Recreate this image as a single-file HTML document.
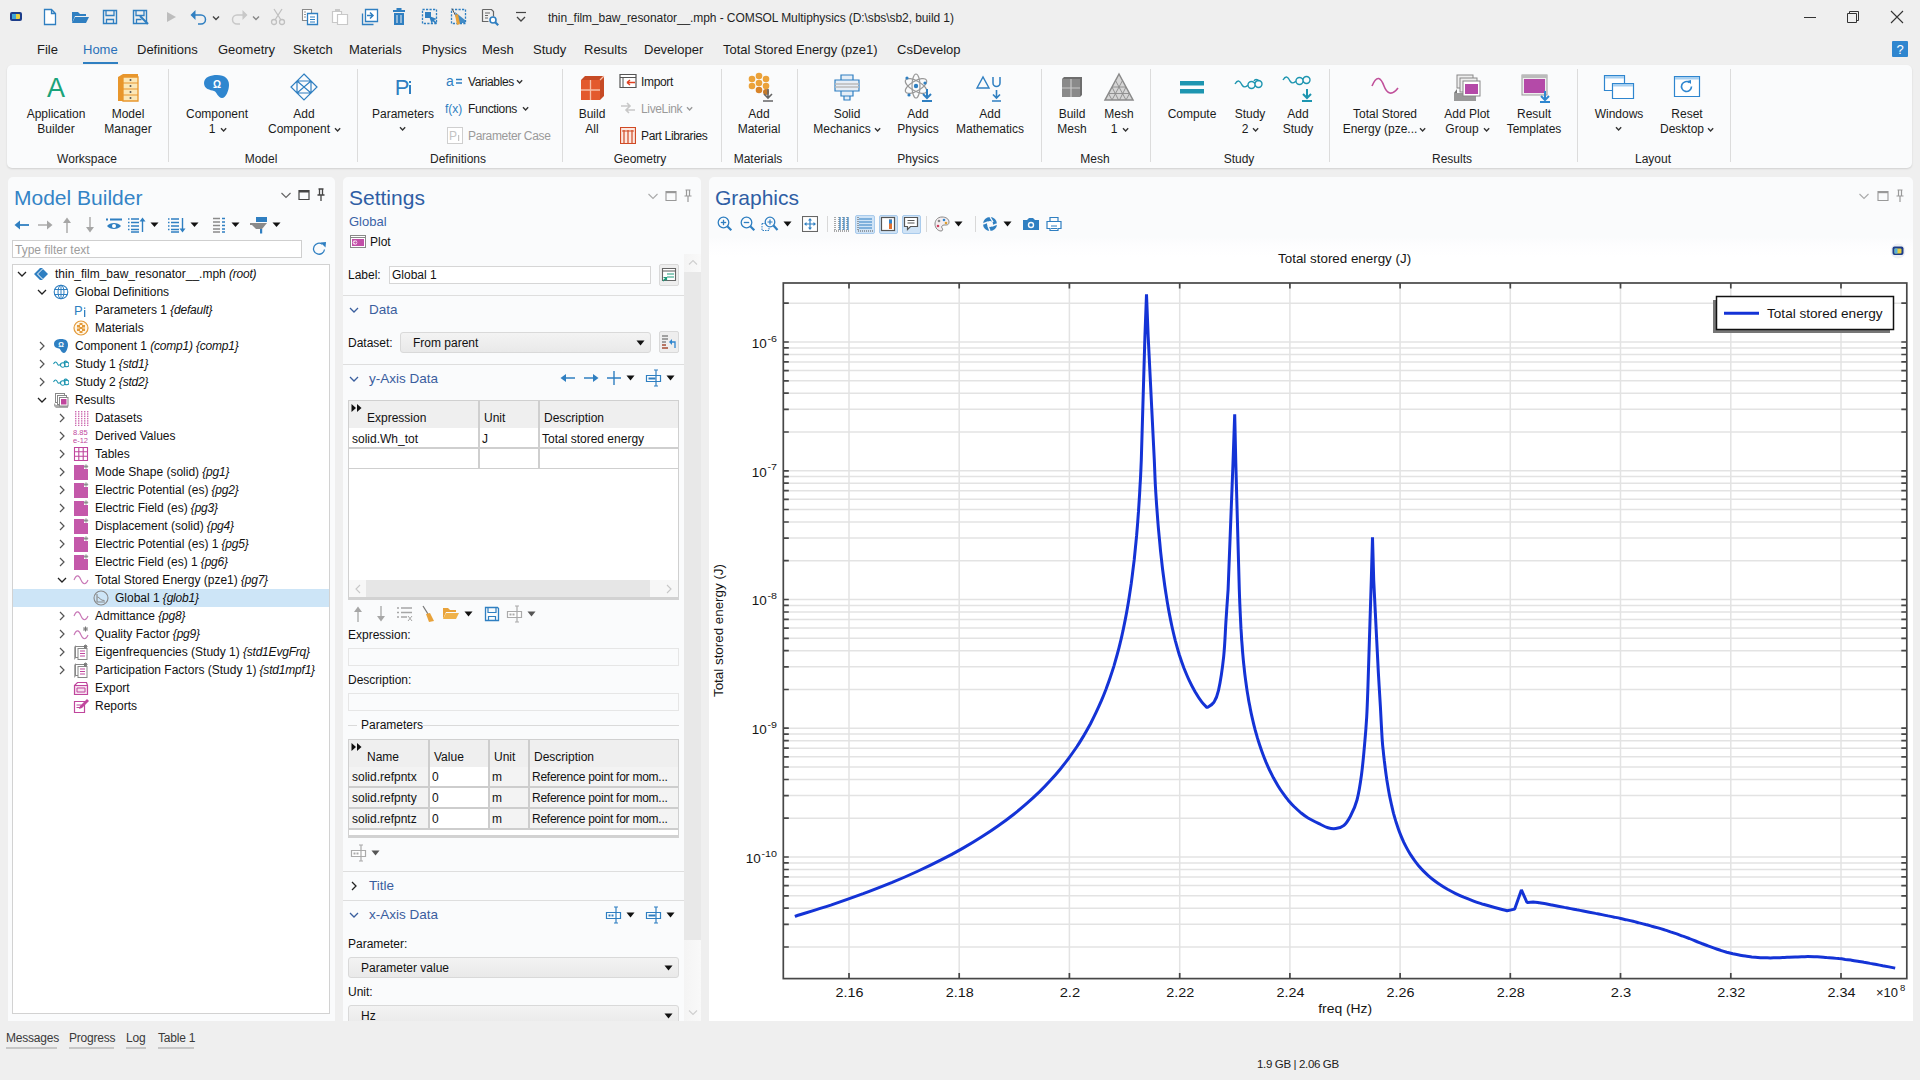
<!DOCTYPE html>
<html><head><meta charset="utf-8">
<style>
*{box-sizing:border-box;margin:0;padding:0}
html,body{width:1920px;height:1080px;overflow:hidden;background:#efefef;font-family:"Liberation Sans",sans-serif;color:#1b1b1b;position:relative}
.a{position:absolute;white-space:nowrap}
.t{position:absolute;white-space:nowrap;font-size:13px;line-height:16px}
.panel{position:absolute;background:#fafbfc;border-radius:5px}
</style></head><body>
<svg class="a" style="left:8px;top:10px;" width="16" height="14" viewBox="0 0 16 14"><rect x="2" y="2" width="12" height="9" rx="2" fill="#1d3d8a"/><rect x="4" y="4" width="8" height="5" rx="1" fill="#e8d040"/><rect x="4" y="4" width="4" height="5" fill="#3fa7d6"/></svg>
<svg class="a" style="left:42px;top:8px;" width="16" height="18" viewBox="0 0 16 18"><path d="M2.5 1.5h7l4 4v11h-11z M9.5 1.5v4h4" stroke="#2f7fc1" stroke-width="1.3" fill="#fff"/></svg>
<svg class="a" style="left:71px;top:9px;" width="19" height="16" viewBox="0 0 19 16"><path d="M1 3h6l2 2h6v2H4L1 14z" fill="#2f7fc1"/><path d="M4 8h14l-3 6H1z" fill="#2f7fc1"/></svg>
<svg class="a" style="left:102px;top:9px;" width="16" height="16" viewBox="0 0 16 16"><path d="M1.5 1.5h13v13h-13z" stroke="#2f7fc1" stroke-width="1.4" fill="none"/><path d="M4 1.5v5h8v-5M4.5 14.5v-4h7v4" stroke="#2f7fc1" stroke-width="1.3" fill="none"/></svg>
<svg class="a" style="left:132px;top:9px;" width="18" height="17" viewBox="0 0 18 17"><path d="M1.5 1.5h13v13h-13z" stroke="#2f7fc1" stroke-width="1.4" fill="none"/><path d="M4 1.5v5h8v-5M4.5 14.5v-4h5" stroke="#2f7fc1" stroke-width="1.3" fill="none"/><path d="M8 7l8 8" stroke="#2f7fc1" stroke-width="2.2"/></svg>
<svg class="a" style="left:166px;top:11px;" width="12" height="12" viewBox="0 0 12 12"><path d="M1 1l9 5-9 5z" fill="#bdbdbd"/></svg>
<svg class="a" style="left:190px;top:9px;" width="18" height="16" viewBox="0 0 18 16"><path d="M3 6h8a4.5 4.5 0 0 1 0 9H8" stroke="#2f7fc1" stroke-width="1.5" fill="none"/><path d="M0.5 6l5-5v10z" fill="#2f7fc1"/></svg>
<svg class="a" style="left:212px;top:15px;" width="8" height="6" viewBox="0 0 8 6"><path d="M1 1.5 L4 4.5 L7 1.5" stroke="#444" stroke-width="1.4" fill="none"/></svg>
<svg class="a" style="left:230px;top:9px;" width="18" height="16" viewBox="0 0 18 16"><path d="M15 6H7a4.5 4.5 0 0 0 0 9h3" stroke="#c8c8c8" stroke-width="1.5" fill="none"/><path d="M17.5 6l-5-5v10z" fill="#c8c8c8"/></svg>
<svg class="a" style="left:252px;top:15px;" width="8" height="6" viewBox="0 0 8 6"><path d="M1 1.5 L4 4.5 L7 1.5" stroke="#888" stroke-width="1.4" fill="none"/></svg>
<svg class="a" style="left:270px;top:8px;" width="16" height="18" viewBox="0 0 16 18"><circle cx="4" cy="14" r="2.5" stroke="#c0c0c0" stroke-width="1.3" fill="none"/><circle cx="12" cy="14" r="2.5" stroke="#c0c0c0" stroke-width="1.3" fill="none"/><path d="M5 12L12 1M11 12L4 1" stroke="#c0c0c0" stroke-width="1.3"/></svg>
<svg class="a" style="left:301px;top:8px;" width="18" height="18" viewBox="0 0 18 18"><path d="M1.5 1.5h9v11h-9z" stroke="#8a8a8a" stroke-width="1.1" fill="#fff"/><path d="M3 4h2M3 6.5h2M3 9h2" stroke="#8a8a8a" stroke-width="0.9"/><path d="M6.5 5.5h10v11h-10z" stroke="#2f7fc1" stroke-width="1.3" fill="#fff"/><path d="M9 9h5M9 11.5h5M9 14h5" stroke="#2f7fc1" stroke-width="1.1"/></svg>
<svg class="a" style="left:331px;top:8px;" width="18" height="18" viewBox="0 0 18 18"><path d="M1.5 3.5h9v11h-9z" stroke="#c8c8c8" stroke-width="1.2" fill="#fff"/><path d="M6.5 6.5h10v10h-10z" stroke="#c8c8c8" stroke-width="1.2" fill="#fff"/><rect x="4" y="1" width="5" height="3" fill="#c8c8c8"/></svg>
<svg class="a" style="left:361px;top:8px;" width="18" height="18" viewBox="0 0 18 18"><path d="M4.5 1.5h12v12h-12z" stroke="#2f7fc1" stroke-width="1.3" fill="#fff"/><path d="M1.5 5.5v11h11" stroke="#2f7fc1" stroke-width="1.3" fill="none"/><path d="M6 7.5h6M9 4.5l3 3-3 3" stroke="#2f7fc1" stroke-width="1.5" fill="none"/></svg>
<svg class="a" style="left:392px;top:8px;" width="14" height="18" viewBox="0 0 14 18"><rect x="1" y="2" width="12" height="2" fill="#2f7fc1"/><rect x="4.5" y="0" width="5" height="2" fill="#2f7fc1"/><path d="M2 5h10v12H2z" fill="#2f7fc1"/><path d="M5 7v8M9 7v8" stroke="#f0f0f0" stroke-width="1"/></svg>
<svg class="a" style="left:421px;top:8px;" width="18" height="18" viewBox="0 0 18 18"><path d="M1.5 1.5h14v14h-14z" stroke="#2f7fc1" stroke-width="1.3" stroke-dasharray="2.2 1.3" fill="none"/><rect x="4" y="4" width="6" height="6" fill="#2f7fc1"/><path d="M8 8l8 3-3 1 3 3-1.2 1.2-3-3-1 3z" fill="#2f7fc1"/></svg>
<svg class="a" style="left:450px;top:8px;" width="18" height="18" viewBox="0 0 18 18"><path d="M1.5 1.5h14v14h-14z" stroke="#2f7fc1" stroke-width="1.3" stroke-dasharray="2.2 1.3" fill="none"/><path d="M5 4l10 8v3H8z" fill="#2f7fc1" opacity="0.9"/><path d="M2 0.5l4 8" stroke="#555" stroke-width="1"/><path d="M5 7l3-1 2 10-3 1z" fill="#e8a23a"/></svg>
<svg class="a" style="left:481px;top:8px;" width="18" height="18" viewBox="0 0 18 18"><path d="M1.5 1.5h9l2 2v5M1.5 1.5v12h6" stroke="#666" stroke-width="1.2" fill="none"/><path d="M4 5h5M4 7.5h3M4 10h3" stroke="#666" stroke-width="1"/><circle cx="12" cy="12" r="3" stroke="#2f7fc1" stroke-width="1.6" fill="#fff"/><path d="M14.2 14.2l3 3" stroke="#2f7fc1" stroke-width="2.2"/></svg>
<svg class="a" style="left:515px;top:11px;" width="12" height="14" viewBox="0 0 12 14"><path d="M1 1.5h10" stroke="#444" stroke-width="1.2"/><path d="M2 6l4 4 4-4" stroke="#444" stroke-width="1.3" fill="none"/></svg>
<div class="t" style="left:548px;top:9.5px;font-size:12px;color:#1f1f1f;letter-spacing:-0.08px">thin_film_baw_resonator__.mph - COMSOL Multiphysics (D:\sbs\sb2, build 1)</div>
<svg class="a" style="left:1803px;top:10px;" width="14" height="14" viewBox="0 0 14 14"><path d="M1 7.5h12" stroke="#333" stroke-width="1"/></svg>
<svg class="a" style="left:1846px;top:10px;" width="14" height="14" viewBox="0 0 14 14"><path d="M1.5 3.5h9v9h-9z M3.5 3.5v-2h9v9h-2" stroke="#333" stroke-width="1" fill="none"/></svg>
<svg class="a" style="left:1890px;top:10px;" width="14" height="14" viewBox="0 0 14 14"><path d="M1 1l12 12M13 1L1 13" stroke="#333" stroke-width="1.1"/></svg>
<svg class="a" style="left:1892px;top:41px;" width="16" height="16" viewBox="0 0 16 16"><rect x="0" y="0" width="16" height="16" rx="1" fill="#2f86cf"/><text x="8" y="13" text-anchor="middle" font-family="Liberation Sans" font-size="13" fill="#fff">?</text></svg>
<div class="t" style="left:37px;top:41.5px;font-size:13px;color:#1b1b1b;">File</div>
<div class="t" style="left:83px;top:41.5px;font-size:13px;color:#2a6fb8;">Home</div>
<div class="t" style="left:137px;top:41.5px;font-size:13px;color:#1b1b1b;">Definitions</div>
<div class="t" style="left:218px;top:41.5px;font-size:13px;color:#1b1b1b;">Geometry</div>
<div class="t" style="left:293px;top:41.5px;font-size:13px;color:#1b1b1b;">Sketch</div>
<div class="t" style="left:349px;top:41.5px;font-size:13px;color:#1b1b1b;">Materials</div>
<div class="t" style="left:422px;top:41.5px;font-size:13px;color:#1b1b1b;">Physics</div>
<div class="t" style="left:482px;top:41.5px;font-size:13px;color:#1b1b1b;">Mesh</div>
<div class="t" style="left:533px;top:41.5px;font-size:13px;color:#1b1b1b;">Study</div>
<div class="t" style="left:584px;top:41.5px;font-size:13px;color:#1b1b1b;">Results</div>
<div class="t" style="left:644px;top:41.5px;font-size:13px;color:#1b1b1b;">Developer</div>
<div class="t" style="left:723px;top:41.5px;font-size:13px;color:#1b1b1b;">Total Stored Energy (pze1)</div>
<div class="t" style="left:897px;top:41.5px;font-size:13px;color:#1b1b1b;">CsDevelop</div>
<div class="a" style="left:83px;top:62px;width:35px;height:2px;background:#2f7fc1"></div>
<div class="panel" style="left:7px;top:65px;width:1905px;height:103px;box-shadow:0 1px 2px rgba(0,0,0,0.13)"></div>
<div class="a" style="left:168.0px;top:69px;width:1px;height:93px;background:#dcdcdc"></div>
<div class="a" style="left:357.0px;top:69px;width:1px;height:93px;background:#dcdcdc"></div>
<div class="a" style="left:562.0px;top:69px;width:1px;height:93px;background:#dcdcdc"></div>
<div class="a" style="left:721.0px;top:69px;width:1px;height:93px;background:#dcdcdc"></div>
<div class="a" style="left:797.0px;top:69px;width:1px;height:93px;background:#dcdcdc"></div>
<div class="a" style="left:1040.5px;top:69px;width:1px;height:93px;background:#dcdcdc"></div>
<div class="a" style="left:1150.0px;top:69px;width:1px;height:93px;background:#dcdcdc"></div>
<div class="a" style="left:1329.0px;top:69px;width:1px;height:93px;background:#dcdcdc"></div>
<div class="a" style="left:1577.0px;top:69px;width:1px;height:93px;background:#dcdcdc"></div>
<div class="a" style="left:1729.5px;top:69px;width:1px;height:93px;background:#dcdcdc"></div>
<div class="t" style="left:7.0px;top:150.5px;width:160px;text-align:center;font-size:12px;color:#222;">Workspace</div>
<div class="t" style="left:181.0px;top:150.5px;width:160px;text-align:center;font-size:12px;color:#222;">Model</div>
<div class="t" style="left:378.0px;top:150.5px;width:160px;text-align:center;font-size:12px;color:#222;">Definitions</div>
<div class="t" style="left:560.0px;top:150.5px;width:160px;text-align:center;font-size:12px;color:#222;">Geometry</div>
<div class="t" style="left:678.0px;top:150.5px;width:160px;text-align:center;font-size:12px;color:#222;">Materials</div>
<div class="t" style="left:838.0px;top:150.5px;width:160px;text-align:center;font-size:12px;color:#222;">Physics</div>
<div class="t" style="left:1015.0px;top:150.5px;width:160px;text-align:center;font-size:12px;color:#222;">Mesh</div>
<div class="t" style="left:1159.0px;top:150.5px;width:160px;text-align:center;font-size:12px;color:#222;">Study</div>
<div class="t" style="left:1372.0px;top:150.5px;width:160px;text-align:center;font-size:12px;color:#222;">Results</div>
<div class="t" style="left:1573.0px;top:150.5px;width:160px;text-align:center;font-size:12px;color:#222;">Layout</div>
<svg class="a" style="left:40px;top:71px;" width="32" height="34" viewBox="0 0 32 34"><text x="16" y="26" text-anchor="middle" font-family="Liberation Sans" font-size="27" fill="#1aa37a">A</text></svg>
<div class="t" style="left:-24.0px;top:106.0px;width:160px;text-align:center;font-size:12px;color:#1b1b1b;">Application</div>
<div class="t" style="left:-24.0px;top:121.0px;width:160px;text-align:center;font-size:12px;color:#1b1b1b;">Builder</div>
<svg class="a" style="left:112px;top:71px;" width="32" height="34" viewBox="0 0 32 34"><path d="M6 6l5-3h15v24l-5 3H6z" fill="#e8962c"/><path d="M11 6h15v24H11z" fill="#fbe7b8" stroke="#e8962c" stroke-width="1.3"/><path d="M11 12h15M11 18h15M11 24h15" stroke="#e8962c" stroke-width="1.2"/><circle cx="18.5" cy="9" r="1" fill="#555"/><circle cx="18.5" cy="15" r="1" fill="#555"/><circle cx="18.5" cy="21" r="1" fill="#555"/><circle cx="18.5" cy="27" r="1" fill="#555"/></svg>
<div class="t" style="left:48.0px;top:106.0px;width:160px;text-align:center;font-size:12px;color:#1b1b1b;">Model</div>
<div class="t" style="left:48.0px;top:121.0px;width:160px;text-align:center;font-size:12px;color:#1b1b1b;">Manager</div>
<svg class="a" style="left:201px;top:71px;" width="32" height="34" viewBox="0 0 32 34"><path d="M3 12c0-6 7-8 13-8 8 0 12 4 12 10 0 5-3 13-7 13-4 0-5-6-8-7-4-1-10-2-10-8z" fill="#2f86cf"/><text x="16" y="17" text-anchor="middle" font-family="Liberation Sans" font-size="10" font-weight="bold" fill="#fff">&#937;</text></svg>
<div class="t" style="left:137.0px;top:106.0px;width:160px;text-align:center;font-size:12px;color:#1b1b1b;">Component</div>
<div class="t" style="left:137.0px;top:121.0px;width:160px;text-align:center;font-size:12px;color:#1b1b1b;">1 &nbsp;&nbsp;</div>
<svg class="a" style="left:219.9px;top:127.4px;" width="7.2" height="5.2" viewBox="0 0 7.2 5.2"><path d="M1 1.3 L3.6 3.9000000000000004 L6.2 1.3" stroke="#333" stroke-width="1.4" fill="none"/></svg>
<svg class="a" style="left:288px;top:71px;" width="32" height="34" viewBox="0 0 32 34"><path d="M16 3l13 13-13 13L3 16z M9 10h14v12H9z M9 10l7 6 7-6M9 22l7-6 7 6" stroke="#2f7fc1" stroke-width="1.2" fill="none"/></svg>
<div class="t" style="left:224.0px;top:106.0px;width:160px;text-align:center;font-size:12px;color:#1b1b1b;">Add</div>
<div class="t" style="left:224.0px;top:121.0px;width:160px;text-align:center;font-size:12px;color:#1b1b1b;">Component &nbsp;&nbsp;</div>
<svg class="a" style="left:334.4px;top:127.4px;" width="7.2" height="5.2" viewBox="0 0 7.2 5.2"><path d="M1 1.3 L3.6 3.9000000000000004 L6.2 1.3" stroke="#333" stroke-width="1.4" fill="none"/></svg>
<svg class="a" style="left:387px;top:71px;" width="32" height="34" viewBox="0 0 32 34"><text x="15" y="24" text-anchor="middle" font-family="Liberation Sans" font-size="22" fill="#2f7fc1">P</text><rect x="22" y="14" width="2" height="9" fill="#2f7fc1"/><rect x="22" y="10" width="2" height="2" fill="#2f7fc1"/></svg>
<div class="t" style="left:323.0px;top:106.0px;width:160px;text-align:center;font-size:12px;color:#1b1b1b;">Parameters</div>
<svg class="a" style="left:399.4px;top:126.4px;" width="7.2" height="5.2" viewBox="0 0 7.2 5.2"><path d="M1 1.3 L3.6 3.9000000000000004 L6.2 1.3" stroke="#333" stroke-width="1.4" fill="none"/></svg>
<svg class="a" style="left:446px;top:73px;" width="18" height="16" viewBox="0 0 18 16"><text x="0" y="13" font-family="Liberation Sans" font-size="14" fill="#2f7fc1">a</text><path d="M10 6.5h6M10 10h6" stroke="#2f7fc1" stroke-width="1.3"/></svg>
<div class="t" style="left:468px;top:73.5px;font-size:12px;color:#1b1b1b;letter-spacing:-0.35px">Variables</div>
<svg class="a" style="left:516.4px;top:79.4px;" width="7.2" height="5.2" viewBox="0 0 7.2 5.2"><path d="M1 1.3 L3.6 3.9000000000000004 L6.2 1.3" stroke="#333" stroke-width="1.4" fill="none"/></svg>
<svg class="a" style="left:445px;top:100px;" width="20" height="16" viewBox="0 0 20 16"><text x="0" y="12.5" font-family="Liberation Sans" font-size="12" fill="#2f7fc1">f(x)</text></svg>
<div class="t" style="left:468px;top:100.5px;font-size:12px;color:#1b1b1b;letter-spacing:-0.35px">Functions</div>
<svg class="a" style="left:522.4px;top:106.4px;" width="7.2" height="5.2" viewBox="0 0 7.2 5.2"><path d="M1 1.3 L3.6 3.9000000000000004 L6.2 1.3" stroke="#333" stroke-width="1.4" fill="none"/></svg>
<svg class="a" style="left:447px;top:127px;" width="16" height="17" viewBox="0 0 16 17"><rect x="0.5" y="0.5" width="15" height="16" fill="#fff" stroke="#cfcfcf"/><text x="2" y="13" font-family="Liberation Sans" font-size="12" fill="#c4c4c4">P</text><rect x="11" y="8" width="1.2" height="6" fill="#c4c4c4"/></svg>
<div class="t" style="left:468px;top:128.0px;font-size:12px;color:#9a9a9a;letter-spacing:-0.35px">Parameter Case</div>
<svg class="a" style="left:576px;top:71px;" width="32" height="34" viewBox="0 0 32 34"><path d="M5 9l4-4h19v20l-4 4H5z" fill="#c64a25"/><path d="M5 9h19v20H5z" fill="#e35a2d"/><path d="M14.5 9v20M5 19h19M24 9l4-4" stroke="#f6c0a8" stroke-width="1.3"/></svg>
<div class="t" style="left:512.0px;top:106.0px;width:160px;text-align:center;font-size:12px;color:#1b1b1b;">Build</div>
<div class="t" style="left:512.0px;top:121.0px;width:160px;text-align:center;font-size:12px;color:#1b1b1b;">All</div>
<svg class="a" style="left:619px;top:73px;" width="18" height="16" viewBox="0 0 18 16"><path d="M1 1.5h16v13H1z" stroke="#555" stroke-width="1.2" fill="#fff"/><path d="M1 4.5h16M4 4.5v10" stroke="#555" stroke-width="1"/><path d="M8 9.5h8M8 9.5l3-2.5M8 9.5l3 2.5" stroke="#e04020" stroke-width="1.4" fill="none"/></svg>
<div class="t" style="left:641px;top:73.5px;font-size:12px;color:#1b1b1b;letter-spacing:-0.35px">Import</div>
<svg class="a" style="left:619px;top:101px;" width="18" height="14" viewBox="0 0 18 14"><path d="M2 5h9M8 2l3 3-3 3M16 9H7M10 12l-3-3 3-3" stroke="#c8c8c8" stroke-width="1.6" fill="none"/></svg>
<div class="t" style="left:641px;top:100.5px;font-size:12px;color:#9a9a9a;letter-spacing:-0.35px">LiveLink</div>
<svg class="a" style="left:686.4px;top:106.4px;" width="7.2" height="5.2" viewBox="0 0 7.2 5.2"><path d="M1 1.3 L3.6 3.9000000000000004 L6.2 1.3" stroke="#999" stroke-width="1.4" fill="none"/></svg>
<svg class="a" style="left:620px;top:127px;" width="16" height="17" viewBox="0 0 16 17"><path d="M0.5 0.5h15v16H0.5z" stroke="#d04a25" stroke-width="1.2" fill="#fde8e0"/><path d="M4 3v13M8 3v13M12 3v13" stroke="#d04a25" stroke-width="1.2"/><path d="M2 4h12" stroke="#d04a25" stroke-width="1"/></svg>
<div class="t" style="left:641px;top:128.0px;font-size:12px;color:#1b1b1b;letter-spacing:-0.35px">Part Libraries</div>
<svg class="a" style="left:743px;top:71px;" width="32" height="34" viewBox="0 0 32 34"><g fill="#eba23a"><circle cx="9" cy="8" r="3.3"/><circle cx="16" cy="5" r="3.3"/><circle cx="23" cy="8" r="3.3"/><circle cx="9" cy="15" r="3.3"/><circle cx="16" cy="12" r="3.3"/><circle cx="23" cy="15" r="3.3"/><circle cx="16" cy="19" r="3.3" fill="#d88328"/><circle cx="23" cy="21" r="3" fill="#c67a2a"/></g><path d="M25 18v9M21 23l4 4 4-4M20 30h10" stroke="#666" stroke-width="1.6" fill="none"/></svg>
<div class="t" style="left:679.0px;top:106.0px;width:160px;text-align:center;font-size:12px;color:#1b1b1b;">Add</div>
<div class="t" style="left:679.0px;top:121.0px;width:160px;text-align:center;font-size:12px;color:#1b1b1b;">Material</div>
<svg class="a" style="left:831px;top:71px;" width="32" height="34" viewBox="0 0 32 34"><path d="M10 4h12v5H10zM4 9h24v11H4zM10 20h12v5H10zM13 25h6v4h-6z" stroke="#2f7fc1" stroke-width="1.2" fill="#e6eef6"/><path d="M4 13h24M4 16h24" stroke="#bbb" stroke-width="1.5"/></svg>
<div class="t" style="left:767.0px;top:106.0px;width:160px;text-align:center;font-size:12px;color:#1b1b1b;">Solid</div>
<div class="t" style="left:767.0px;top:121.0px;width:160px;text-align:center;font-size:12px;color:#1b1b1b;">Mechanics &nbsp;&nbsp;</div>
<svg class="a" style="left:874.4px;top:127.4px;" width="7.2" height="5.2" viewBox="0 0 7.2 5.2"><path d="M1 1.3 L3.6 3.9000000000000004 L6.2 1.3" stroke="#333" stroke-width="1.4" fill="none"/></svg>
<svg class="a" style="left:902px;top:71px;" width="32" height="34" viewBox="0 0 32 34"><ellipse cx="14" cy="15" rx="12" ry="5" transform="rotate(30 14 15)" stroke="#999" stroke-width="1.2" fill="none"/><ellipse cx="14" cy="15" rx="12" ry="5" transform="rotate(-30 14 15)" stroke="#999" stroke-width="1.2" fill="none"/><ellipse cx="14" cy="15" rx="4" ry="12" stroke="#999" stroke-width="1.2" fill="none"/><circle cx="14" cy="15" r="2.2" fill="#2f7fc1"/><circle cx="5" cy="7" r="1.6" fill="#2f7fc1"/><circle cx="23" cy="12" r="1.6" fill="#2f7fc1"/><circle cx="7" cy="24" r="1.6" fill="#2f7fc1"/><path d="M25 18v9M21 23l4 4 4-4M20 30h10" stroke="#2f7fc1" stroke-width="2" fill="none"/></svg>
<div class="t" style="left:838.0px;top:106.0px;width:160px;text-align:center;font-size:12px;color:#1b1b1b;">Add</div>
<div class="t" style="left:838.0px;top:121.0px;width:160px;text-align:center;font-size:12px;color:#1b1b1b;">Physics</div>
<svg class="a" style="left:974px;top:71px;" width="32" height="34" viewBox="0 0 32 34"><path d="M3 17l6-11 6 11z" stroke="#2f7fc1" stroke-width="1.4" fill="none"/><path d="M19 6v6a3.5 3.5 0 0 0 7 0V6" stroke="#2f7fc1" stroke-width="1.5" fill="none"/><path d="M22.5 19v8M19 23.5l3.5 3.5 3.5-3.5M18 30h9" stroke="#2f7fc1" stroke-width="1.6" fill="none"/></svg>
<div class="t" style="left:910.0px;top:106.0px;width:160px;text-align:center;font-size:12px;color:#1b1b1b;">Add</div>
<div class="t" style="left:910.0px;top:121.0px;width:160px;text-align:center;font-size:12px;color:#1b1b1b;">Mathematics</div>
<svg class="a" style="left:1056px;top:71px;" width="32" height="34" viewBox="0 0 32 34"><path d="M6 8l2-2h18v18l-2 2H6z" fill="#6d6d6d"/><path d="M6 8h18v18H6z" fill="#8a8a8a"/><path d="M15 8v18M6 17h18" stroke="#c8c8c8" stroke-width="1.2"/></svg>
<div class="t" style="left:992.0px;top:106.0px;width:160px;text-align:center;font-size:12px;color:#1b1b1b;">Build</div>
<div class="t" style="left:992.0px;top:121.0px;width:160px;text-align:center;font-size:12px;color:#1b1b1b;">Mesh</div>
<svg class="a" style="left:1103px;top:71px;" width="32" height="34" viewBox="0 0 32 34"><path d="M16 3L30 29H2z" stroke="#8a8a8a" stroke-width="1.5" fill="#d5d5d5"/><path d="M9 16h14M5.5 22.5h21M12.5 9.5L23 29M19.5 9.5L9 29M9 16l6.5 13M23 16l-6.5 13M5.5 22.5L9 29M26.5 22.5L23 29" stroke="#8a8a8a" stroke-width="0.9" fill="none"/></svg>
<div class="t" style="left:1039.0px;top:106.0px;width:160px;text-align:center;font-size:12px;color:#1b1b1b;">Mesh</div>
<div class="t" style="left:1039.0px;top:121.0px;width:160px;text-align:center;font-size:12px;color:#1b1b1b;">1 &nbsp;&nbsp;</div>
<svg class="a" style="left:1122.4px;top:127.4px;" width="7.2" height="5.2" viewBox="0 0 7.2 5.2"><path d="M1 1.3 L3.6 3.9000000000000004 L6.2 1.3" stroke="#333" stroke-width="1.4" fill="none"/></svg>
<svg class="a" style="left:1176px;top:71px;" width="32" height="34" viewBox="0 0 32 34"><rect x="4" y="10" width="24" height="4.5" fill="#1d95b0"/><rect x="4" y="18" width="24" height="4.5" fill="#1d95b0"/></svg>
<div class="t" style="left:1112.0px;top:106.0px;width:160px;text-align:center;font-size:12px;color:#1b1b1b;">Compute</div>
<svg class="a" style="left:1234px;top:71px;" width="32" height="34" viewBox="0 0 32 34"><path d="M1 13c3-5 5-3 7 1 2 3 4 2 6 0M14 14a3.5 3.5 0 1 0 7 0a3.5 3.5 0 1 0-7 0M21 13a3.5 3.5 0 1 0 7 0a3.5 3.5 0 1 0-7 0M20 10c1-2 3-2 5 0" stroke="#1d95b0" stroke-width="1.4" fill="none"/></svg>
<div class="t" style="left:1170.0px;top:106.0px;width:160px;text-align:center;font-size:12px;color:#1b1b1b;">Study</div>
<div class="t" style="left:1170.0px;top:121.0px;width:160px;text-align:center;font-size:12px;color:#1b1b1b;">2 &nbsp;&nbsp;</div>
<svg class="a" style="left:1252.4px;top:127.4px;" width="7.2" height="5.2" viewBox="0 0 7.2 5.2"><path d="M1 1.3 L3.6 3.9000000000000004 L6.2 1.3" stroke="#333" stroke-width="1.4" fill="none"/></svg>
<svg class="a" style="left:1282px;top:71px;" width="32" height="34" viewBox="0 0 32 34"><path d="M1 9c3-5 5-3 7 1 2 3 4 2 6 0M14 10a3.5 3.5 0 1 0 7 0a3.5 3.5 0 1 0-7 0M21 9a3.5 3.5 0 1 0 7 0a3.5 3.5 0 1 0-7 0" stroke="#1d95b0" stroke-width="1.4" fill="none"/><path d="M25 18v9M21 23l4 4 4-4M20 30h10" stroke="#1d95b0" stroke-width="2" fill="none"/></svg>
<div class="t" style="left:1218.0px;top:106.0px;width:160px;text-align:center;font-size:12px;color:#1b1b1b;">Add</div>
<div class="t" style="left:1218.0px;top:121.0px;width:160px;text-align:center;font-size:12px;color:#1b1b1b;">Study</div>
<svg class="a" style="left:1369px;top:71px;" width="32" height="34" viewBox="0 0 32 34"><path d="M3 15c5-12 9-8 12 0s8 10 14 2" stroke="#c0509a" stroke-width="1.6" fill="none"/></svg>
<div class="t" style="left:1305.0px;top:106.0px;width:160px;text-align:center;font-size:12px;color:#1b1b1b;">Total Stored</div>
<div class="t" style="left:1305.0px;top:121.0px;width:160px;text-align:center;font-size:12px;color:#1b1b1b;">Energy (pze... &nbsp;&nbsp;</div>
<svg class="a" style="left:1419.4px;top:127.4px;" width="7.2" height="5.2" viewBox="0 0 7.2 5.2"><path d="M1 1.3 L3.6 3.9000000000000004 L6.2 1.3" stroke="#333" stroke-width="1.4" fill="none"/></svg>
<svg class="a" style="left:1451px;top:71px;" width="32" height="34" viewBox="0 0 32 34"><path d="M3 22l3-4v10l-3 2z" fill="#777"/><path d="M3 22h22v8H3z" fill="#999"/><rect x="6" y="4" width="16" height="13" fill="#eee" stroke="#888"/><rect x="9" y="7" width="17" height="14" fill="#eee" stroke="#888"/><rect x="12" y="10" width="17" height="15" fill="#fff" stroke="#888"/><rect x="14" y="13" width="13" height="10" fill="#b44aa8"/></svg>
<div class="t" style="left:1387.0px;top:106.0px;width:160px;text-align:center;font-size:12px;color:#1b1b1b;">Add Plot</div>
<div class="t" style="left:1387.0px;top:121.0px;width:160px;text-align:center;font-size:12px;color:#1b1b1b;">Group &nbsp;&nbsp;</div>
<svg class="a" style="left:1483.4px;top:127.4px;" width="7.2" height="5.2" viewBox="0 0 7.2 5.2"><path d="M1 1.3 L3.6 3.9000000000000004 L6.2 1.3" stroke="#333" stroke-width="1.4" fill="none"/></svg>
<svg class="a" style="left:1518px;top:71px;" width="32" height="34" viewBox="0 0 32 34"><rect x="4" y="4" width="25" height="20" fill="#eee" stroke="#999"/><rect x="4" y="4" width="25" height="3" fill="#bbb"/><rect x="6" y="8" width="21" height="14" fill="#b44aa8"/><path d="M27 20v8M23 25l4 4 4-4M22 31h10" stroke="#2f86cf" stroke-width="2" fill="none"/></svg>
<div class="t" style="left:1454.0px;top:106.0px;width:160px;text-align:center;font-size:12px;color:#1b1b1b;">Result</div>
<div class="t" style="left:1454.0px;top:121.0px;width:160px;text-align:center;font-size:12px;color:#1b1b1b;">Templates</div>
<svg class="a" style="left:1603px;top:71px;" width="32" height="34" viewBox="0 0 32 34"><path d="M1.5 4.5h20v15h-20z" stroke="#2f86cf" stroke-width="1.2" fill="#fff"/><rect x="2" y="5" width="19" height="2.5" fill="#a9d0f0"/><path d="M9.5 12.5h21v15h-21z" stroke="#2f86cf" stroke-width="1.2" fill="#fff"/><rect x="10" y="13" width="20" height="2.5" fill="#a9d0f0"/></svg>
<div class="t" style="left:1539.0px;top:106.0px;width:160px;text-align:center;font-size:12px;color:#1b1b1b;">Windows</div>
<svg class="a" style="left:1615.4px;top:126.4px;" width="7.2" height="5.2" viewBox="0 0 7.2 5.2"><path d="M1 1.3 L3.6 3.9000000000000004 L6.2 1.3" stroke="#333" stroke-width="1.4" fill="none"/></svg>
<svg class="a" style="left:1671px;top:71px;" width="32" height="34" viewBox="0 0 32 34"><path d="M3.5 5.5h25v20h-25z" stroke="#2f86cf" stroke-width="1.2" fill="#fff"/><rect x="4" y="6" width="24" height="2.5" fill="#a9d0f0"/><path d="M20.5 15.5a5 5 0 1 1-2-4" stroke="#2f86cf" stroke-width="1.6" fill="none"/><path d="M16 10l4-1 0 4z" fill="#2f86cf"/></svg>
<div class="t" style="left:1607.0px;top:106.0px;width:160px;text-align:center;font-size:12px;color:#1b1b1b;">Reset</div>
<div class="t" style="left:1607.0px;top:121.0px;width:160px;text-align:center;font-size:12px;color:#1b1b1b;">Desktop &nbsp;&nbsp;</div>
<svg class="a" style="left:1707.4px;top:127.4px;" width="7.2" height="5.2" viewBox="0 0 7.2 5.2"><path d="M1 1.3 L3.6 3.9000000000000004 L6.2 1.3" stroke="#333" stroke-width="1.4" fill="none"/></svg>
<div class="panel" style="left:8px;top:177px;width:327px;height:844px;border-radius:5px 5px 0 0"></div>
<div class="panel" style="left:343px;top:177px;width:358px;height:844px;border-radius:5px 5px 0 0"></div>
<div class="panel" style="left:709px;top:177px;width:1204px;height:844px;border-radius:5px 5px 0 0"></div>
<div class="t" style="left:14px;top:185px;font-size:21px;line-height:26px;color:#3484c6">Model Builder</div>
<svg class="a" style="left:280px;top:190px;" width="12" height="10" viewBox="0 0 12 10"><path d="M1.5 3l4.5 4.5L10.5 3" stroke="#666" stroke-width="1.2" fill="none"/></svg>
<svg class="a" style="left:298px;top:189px;" width="12" height="12" viewBox="0 0 12 12"><path d="M1 1.5h10v9H1z" stroke="#444" stroke-width="1.2" fill="none"/><rect x="1" y="1" width="10" height="2.5" fill="#444"/></svg>
<svg class="a" style="left:316px;top:188px;" width="10" height="14" viewBox="0 0 10 14"><path d="M2.5 1h5M3.5 1v6M6.5 1v6M1.5 7h7M5 7v6" stroke="#444" stroke-width="1.3" fill="none"/></svg>
<svg class="a" style="left:14px;top:218.5px;" width="16" height="12" viewBox="0 0 16 12"><path d="M2 6h13" stroke="#2f7fc1" stroke-width="1.8"/><path d="M0.5 6L6 1.5v9z" fill="#2f7fc1"/></svg>
<svg class="a" style="left:37px;top:218.5px;" width="16" height="12" viewBox="0 0 16 12"><path d="M1 6h12" stroke="#a6a6a6" stroke-width="1.4"/><path d="M15.5 6L10 1.5v9z" fill="#a6a6a6"/></svg>
<svg class="a" style="left:62px;top:216.5px;" width="10" height="16" viewBox="0 0 10 16"><path d="M5 3v13" stroke="#a6a6a6" stroke-width="1.4"/><path d="M5 0.5L1 6h8z" fill="#a6a6a6"/></svg>
<svg class="a" style="left:85px;top:216.5px;" width="10" height="16" viewBox="0 0 10 16"><path d="M5 0v13" stroke="#a6a6a6" stroke-width="1.4"/><path d="M5 15.5L1 10h8z" fill="#a6a6a6"/></svg>
<svg class="a" style="left:106px;top:217.5px;" width="16" height="13" viewBox="0 0 16 13"><path d="M0 1.5h2M4 1.5h12" stroke="#2f7fc1" stroke-width="1.8"/><path d="M1 8c3-4 11-4 14 0-3 4-11 4-14 0z" fill="#2f7fc1"/><circle cx="8" cy="8" r="2" fill="#fff"/></svg>
<svg class="a" style="left:128px;top:216.5px;" width="18" height="16" viewBox="0 0 18 16"><path d="M3 2h8M3 5.5h8M3 9h8M3 12.5h8M3 15h8" stroke="#2f7fc1" stroke-width="1.3"/><path d="M0 2h1.5M0 5.5h1.5M0 9h1.5M0 12.5h1.5" stroke="#2f7fc1" stroke-width="1.3"/><path d="M14.5 15V3" stroke="#2f7fc1" stroke-width="1.4"/><path d="M14.5 0.5l-3 4h6z" fill="#2f7fc1"/></svg>
<svg class="a" style="left:150px;top:221.5px;" width="9" height="6" viewBox="0 0 9 6"><path d="M0.5 0.5h8L4.5 5z" fill="#111"/></svg>
<svg class="a" style="left:168px;top:216.5px;" width="18" height="16" viewBox="0 0 18 16"><path d="M3 2h8M3 5.5h8M3 9h8M3 12.5h8M3 15h8" stroke="#2f7fc1" stroke-width="1.3"/><path d="M0 2h1.5M0 5.5h1.5M0 9h1.5M0 12.5h1.5" stroke="#2f7fc1" stroke-width="1.3"/><path d="M14.5 1v12" stroke="#2f7fc1" stroke-width="1.4"/><path d="M14.5 15.5l-3-4h6z" fill="#2f7fc1"/></svg>
<svg class="a" style="left:190px;top:221.5px;" width="9" height="6" viewBox="0 0 9 6"><path d="M0.5 0.5h8L4.5 5z" fill="#111"/></svg>
<svg class="a" style="left:212px;top:216.5px;" width="14" height="16" viewBox="0 0 14 16"><path d="M1 1.5h7M1 5h7M1 8.5h7M1 12h7M1 15h7" stroke="#8a8a8a" stroke-width="1.3"/><path d="M10 1.5h3M10 5h3M10 8.5h3M10 12h3M10 15h3" stroke="#2f7fc1" stroke-width="1.3"/></svg>
<svg class="a" style="left:231px;top:221.5px;" width="9" height="6" viewBox="0 0 9 6"><path d="M0.5 0.5h8L4.5 5z" fill="#111"/></svg>
<svg class="a" style="left:250px;top:216.5px;" width="22" height="17" viewBox="0 0 22 17"><rect x="6" y="0" width="11" height="5" fill="#2f7fc1"/><path d="M0 6h17l-5 6H6z" fill="#8a8a8a"/><rect x="0" y="6" width="5" height="2" fill="#8a8a8a"/><rect x="10" y="12" width="2.2" height="4.5" fill="#2f7fc1"/></svg>
<svg class="a" style="left:272px;top:221.5px;" width="9" height="6" viewBox="0 0 9 6"><path d="M0.5 0.5h8L4.5 5z" fill="#111"/></svg>
<div class="a" style="left:12px;top:240px;width:290px;height:18px;background:#fff;border:1px solid #cfcfcf"></div>
<div class="t" style="left:15px;top:241.5px;font-size:12px;color:#9d9d9d;">Type filter text</div>
<svg class="a" style="left:311px;top:241px;" width="16" height="16" viewBox="0 0 16 16"><path d="M13.5 8.5a5.5 5.5 0 1 1-2.2-5.2" stroke="#2f7fc1" stroke-width="1.3" fill="none"/><path d="M9.5 1.5l5.5-0.5-0.5 5.5z" fill="#2f7fc1"/></svg>
<div class="a" style="left:12px;top:264px;width:318px;height:750px;background:#fff;border:1px solid #d2d2d2"></div>
<div class="a" style="left:13px;top:589px;width:316px;height:18px;background:#cde5f7"></div>
<svg class="a" style="left:17px;top:270px;" width="10" height="8" viewBox="0 0 10 8"><path d="M1 2l4 4 4-4" stroke="#222" stroke-width="1.3" fill="none"/></svg>
<svg class="a" style="left:33px;top:266px;" width="16" height="16" viewBox="0 0 16 16"><path d="M1 8l6-6h3l-6 6 6 6H7z" fill="#2f7fc1"/><path d="M5 8l5-5 5 5-5 5z" fill="#2f7fc1"/></svg>
<div class="t" style="left:55px;top:266px;font-size:12px;color:#111">thin_film_baw_resonator__.mph<i style="letter-spacing:-0.2px"> (root)</i></div>
<svg class="a" style="left:37px;top:288px;" width="10" height="8" viewBox="0 0 10 8"><path d="M1 2l4 4 4-4" stroke="#222" stroke-width="1.3" fill="none"/></svg>
<svg class="a" style="left:53px;top:284px;" width="16" height="16" viewBox="0 0 16 16"><circle cx="8" cy="8" r="6.8" stroke="#2f7fc1" stroke-width="1.1" fill="none"/><ellipse cx="8" cy="8" rx="3" ry="6.8" stroke="#2f7fc1" stroke-width="1" fill="none"/><path d="M8 1.2v13.6M1.5 5.5h13M1.5 10.5h13" stroke="#2f7fc1" stroke-width="1"/></svg>
<div class="t" style="left:75px;top:284px;font-size:12px;color:#111">Global Definitions<i style="letter-spacing:-0.2px"></i></div>
<svg class="a" style="left:73px;top:302px;" width="16" height="16" viewBox="0 0 16 16"><text x="1" y="13" font-family="Liberation Sans" font-size="13" fill="#2f7fc1">P</text><rect x="11" y="8" width="1.3" height="7" fill="#2f7fc1"/><rect x="11" y="5.5" width="1.3" height="1.3" fill="#2f7fc1"/></svg>
<div class="t" style="left:95px;top:302px;font-size:12px;color:#111">Parameters 1<i style="letter-spacing:-0.2px"> {default}</i></div>
<svg class="a" style="left:73px;top:320px;" width="16" height="16" viewBox="0 0 16 16"><circle cx="8" cy="8" r="7" stroke="#e39a3a" stroke-width="1.2" fill="#fff6e6"/><g fill="#e39a3a"><rect x="4" y="5" width="3" height="2.5"/><rect x="9" y="5" width="3" height="2.5"/><rect x="6.5" y="3" width="3" height="2"/><rect x="4" y="8.5" width="3" height="2.5"/><rect x="9" y="8.5" width="3" height="2.5"/><rect x="6.5" y="11" width="3" height="2"/><rect x="6.5" y="7" width="3" height="2"/></g></svg>
<div class="t" style="left:95px;top:320px;font-size:12px;color:#111">Materials<i style="letter-spacing:-0.2px"></i></div>
<svg class="a" style="left:38px;top:341px;" width="8" height="10" viewBox="0 0 8 10"><path d="M2 1l4 4-4 4" stroke="#555" stroke-width="1.2" fill="none"/></svg>
<svg class="a" style="left:53px;top:338px;" width="16" height="16" viewBox="0 0 16 16"><path d="M1 6c0-4 4-5 7-5 5 0 7 2 7 6 0 3-2 8-4 8-3 0-3-4-5-4.5C3 10 1 9 1 6z" fill="#2f7fc1"/><text x="8" y="9" text-anchor="middle" font-family="Liberation Sans" font-size="7" font-weight="bold" fill="#fff">&#937;</text></svg>
<div class="t" style="left:75px;top:338px;font-size:12px;color:#111">Component 1<i style="letter-spacing:-0.2px"> (comp1) {comp1}</i></div>
<svg class="a" style="left:38px;top:359px;" width="8" height="10" viewBox="0 0 8 10"><path d="M2 1l4 4-4 4" stroke="#555" stroke-width="1.2" fill="none"/></svg>
<svg class="a" style="left:53px;top:356px;" width="16" height="16" viewBox="0 0 16 16"><path d="M0.5 8c1.5-3 3-2.5 4 0 1 2 2 1.5 3 0M7.5 9a2.3 2.3 0 1 0 4.6 0a2.3 2.3 0 1 0-4.6 0M11.5 8.5a2.3 2.3 0 1 0 4.6 0a2.3 2.3 0 1 0-4.6 0M11 6.5c0.5-1.5 2-2 3.5-0.5" stroke="#1d95b0" stroke-width="1.1" fill="none"/></svg>
<div class="t" style="left:75px;top:356px;font-size:12px;color:#111">Study 1<i style="letter-spacing:-0.2px"> {std1}</i></div>
<svg class="a" style="left:38px;top:377px;" width="8" height="10" viewBox="0 0 8 10"><path d="M2 1l4 4-4 4" stroke="#555" stroke-width="1.2" fill="none"/></svg>
<svg class="a" style="left:53px;top:374px;" width="16" height="16" viewBox="0 0 16 16"><path d="M0.5 8c1.5-3 3-2.5 4 0 1 2 2 1.5 3 0M7.5 9a2.3 2.3 0 1 0 4.6 0a2.3 2.3 0 1 0-4.6 0M11.5 8.5a2.3 2.3 0 1 0 4.6 0a2.3 2.3 0 1 0-4.6 0M11 6.5c0.5-1.5 2-2 3.5-0.5" stroke="#1d95b0" stroke-width="1.1" fill="none"/></svg>
<div class="t" style="left:75px;top:374px;font-size:12px;color:#111">Study 2<i style="letter-spacing:-0.2px"> {std2}</i></div>
<svg class="a" style="left:37px;top:396px;" width="10" height="8" viewBox="0 0 10 8"><path d="M1 2l4 4 4-4" stroke="#222" stroke-width="1.3" fill="none"/></svg>
<svg class="a" style="left:53px;top:392px;" width="16" height="16" viewBox="0 0 16 16"><path d="M1 11l2 2h12v3H3L1 14z" fill="#aaa"/><rect x="2.5" y="1.5" width="9" height="9" fill="#fff" stroke="#888"/><rect x="4.5" y="3.5" width="9" height="9" fill="#fff" stroke="#888"/><rect x="6.5" y="5.5" width="8.5" height="8.5" fill="#fff" stroke="#888"/><rect x="8" y="7" width="5.5" height="5.5" fill="#c0469d"/></svg>
<div class="t" style="left:75px;top:392px;font-size:12px;color:#111">Results<i style="letter-spacing:-0.2px"></i></div>
<svg class="a" style="left:58px;top:413px;" width="8" height="10" viewBox="0 0 8 10"><path d="M2 1l4 4-4 4" stroke="#555" stroke-width="1.2" fill="none"/></svg>
<svg class="a" style="left:73px;top:410px;" width="16" height="16" viewBox="0 0 16 16"><g fill="#c0469d" opacity="0.8"><rect x="2" y="1.0" width="1.4" height="1.4"/><rect x="2" y="3.3" width="1.4" height="1.4"/><rect x="2" y="5.6" width="1.4" height="1.4"/><rect x="2" y="7.8999999999999995" width="1.4" height="1.4"/><rect x="2" y="10.2" width="1.4" height="1.4"/><rect x="2" y="12.5" width="1.4" height="1.4"/><rect x="2" y="14.799999999999999" width="1.4" height="1.4"/><rect x="5" y="1.0" width="1.4" height="1.4"/><rect x="5" y="3.3" width="1.4" height="1.4"/><rect x="5" y="5.6" width="1.4" height="1.4"/><rect x="5" y="7.8999999999999995" width="1.4" height="1.4"/><rect x="5" y="10.2" width="1.4" height="1.4"/><rect x="5" y="12.5" width="1.4" height="1.4"/><rect x="5" y="14.799999999999999" width="1.4" height="1.4"/><rect x="8" y="1.0" width="1.4" height="1.4"/><rect x="8" y="3.3" width="1.4" height="1.4"/><rect x="8" y="5.6" width="1.4" height="1.4"/><rect x="8" y="7.8999999999999995" width="1.4" height="1.4"/><rect x="8" y="10.2" width="1.4" height="1.4"/><rect x="8" y="12.5" width="1.4" height="1.4"/><rect x="8" y="14.799999999999999" width="1.4" height="1.4"/><rect x="11" y="1.0" width="1.4" height="1.4"/><rect x="11" y="3.3" width="1.4" height="1.4"/><rect x="11" y="5.6" width="1.4" height="1.4"/><rect x="11" y="7.8999999999999995" width="1.4" height="1.4"/><rect x="11" y="10.2" width="1.4" height="1.4"/><rect x="11" y="12.5" width="1.4" height="1.4"/><rect x="11" y="14.799999999999999" width="1.4" height="1.4"/><rect x="14" y="1.0" width="1.4" height="1.4"/><rect x="14" y="3.3" width="1.4" height="1.4"/><rect x="14" y="5.6" width="1.4" height="1.4"/><rect x="14" y="7.8999999999999995" width="1.4" height="1.4"/><rect x="14" y="10.2" width="1.4" height="1.4"/><rect x="14" y="12.5" width="1.4" height="1.4"/><rect x="14" y="14.799999999999999" width="1.4" height="1.4"/></g></svg>
<div class="t" style="left:95px;top:410px;font-size:12px;color:#111">Datasets<i style="letter-spacing:-0.2px"></i></div>
<svg class="a" style="left:58px;top:431px;" width="8" height="10" viewBox="0 0 8 10"><path d="M2 1l4 4-4 4" stroke="#555" stroke-width="1.2" fill="none"/></svg>
<svg class="a" style="left:73px;top:428px;" width="16" height="16" viewBox="0 0 16 16"><text x="0" y="7" font-family="Liberation Sans" font-size="7.5" fill="#c0469d">8.85</text><text x="0" y="15" font-family="Liberation Sans" font-size="7.5" fill="#c0469d">e-12</text></svg>
<div class="t" style="left:95px;top:428px;font-size:12px;color:#111">Derived Values<i style="letter-spacing:-0.2px"></i></div>
<svg class="a" style="left:58px;top:449px;" width="8" height="10" viewBox="0 0 8 10"><path d="M2 1l4 4-4 4" stroke="#555" stroke-width="1.2" fill="none"/></svg>
<svg class="a" style="left:73px;top:446px;" width="16" height="16" viewBox="0 0 16 16"><path d="M1.5 1.5h13v13h-13zM1.5 5.8h13M1.5 10.2h13M5.8 1.5v13M10.2 1.5v13" stroke="#c0469d" stroke-width="1.1" fill="none"/></svg>
<div class="t" style="left:95px;top:446px;font-size:12px;color:#111">Tables<i style="letter-spacing:-0.2px"></i></div>
<svg class="a" style="left:58px;top:467px;" width="8" height="10" viewBox="0 0 8 10"><path d="M2 1l4 4-4 4" stroke="#555" stroke-width="1.2" fill="none"/></svg>
<svg class="a" style="left:73px;top:464px;" width="16" height="16" viewBox="0 0 16 16"><path d="M1 1h10l4 4v11H1z" fill="#c458aa"/><path d="M11 0v5h5z" fill="#fff"/><path d="M13 0.3v4.4M10.8 2.5h4.4M11.5 1l3 3M14.5 1l-3 3" stroke="#8a8a8a" stroke-width="0.9"/></svg>
<div class="t" style="left:95px;top:464px;font-size:12px;color:#111">Mode Shape (solid)<i style="letter-spacing:-0.2px"> {pg1}</i></div>
<svg class="a" style="left:58px;top:485px;" width="8" height="10" viewBox="0 0 8 10"><path d="M2 1l4 4-4 4" stroke="#555" stroke-width="1.2" fill="none"/></svg>
<svg class="a" style="left:73px;top:482px;" width="16" height="16" viewBox="0 0 16 16"><path d="M1 1h10l4 4v11H1z" fill="#c458aa"/><path d="M11 0v5h5z" fill="#fff"/><path d="M13 0.3v4.4M10.8 2.5h4.4M11.5 1l3 3M14.5 1l-3 3" stroke="#8a8a8a" stroke-width="0.9"/></svg>
<div class="t" style="left:95px;top:482px;font-size:12px;color:#111">Electric Potential (es)<i style="letter-spacing:-0.2px"> {pg2}</i></div>
<svg class="a" style="left:58px;top:503px;" width="8" height="10" viewBox="0 0 8 10"><path d="M2 1l4 4-4 4" stroke="#555" stroke-width="1.2" fill="none"/></svg>
<svg class="a" style="left:73px;top:500px;" width="16" height="16" viewBox="0 0 16 16"><path d="M1 1h10l4 4v11H1z" fill="#c458aa"/><path d="M11 0v5h5z" fill="#fff"/><path d="M13 0.3v4.4M10.8 2.5h4.4M11.5 1l3 3M14.5 1l-3 3" stroke="#8a8a8a" stroke-width="0.9"/></svg>
<div class="t" style="left:95px;top:500px;font-size:12px;color:#111">Electric Field (es)<i style="letter-spacing:-0.2px"> {pg3}</i></div>
<svg class="a" style="left:58px;top:521px;" width="8" height="10" viewBox="0 0 8 10"><path d="M2 1l4 4-4 4" stroke="#555" stroke-width="1.2" fill="none"/></svg>
<svg class="a" style="left:73px;top:518px;" width="16" height="16" viewBox="0 0 16 16"><path d="M1 1h10l4 4v11H1z" fill="#c458aa"/><path d="M11 0v5h5z" fill="#fff"/><path d="M13 0.3v4.4M10.8 2.5h4.4M11.5 1l3 3M14.5 1l-3 3" stroke="#8a8a8a" stroke-width="0.9"/></svg>
<div class="t" style="left:95px;top:518px;font-size:12px;color:#111">Displacement (solid)<i style="letter-spacing:-0.2px"> {pg4}</i></div>
<svg class="a" style="left:58px;top:539px;" width="8" height="10" viewBox="0 0 8 10"><path d="M2 1l4 4-4 4" stroke="#555" stroke-width="1.2" fill="none"/></svg>
<svg class="a" style="left:73px;top:536px;" width="16" height="16" viewBox="0 0 16 16"><path d="M1 1h10l4 4v11H1z" fill="#c458aa"/><path d="M11 0v5h5z" fill="#fff"/><path d="M13 0.3v4.4M10.8 2.5h4.4M11.5 1l3 3M14.5 1l-3 3" stroke="#8a8a8a" stroke-width="0.9"/></svg>
<div class="t" style="left:95px;top:536px;font-size:12px;color:#111">Electric Potential (es) 1<i style="letter-spacing:-0.2px"> {pg5}</i></div>
<svg class="a" style="left:58px;top:557px;" width="8" height="10" viewBox="0 0 8 10"><path d="M2 1l4 4-4 4" stroke="#555" stroke-width="1.2" fill="none"/></svg>
<svg class="a" style="left:73px;top:554px;" width="16" height="16" viewBox="0 0 16 16"><path d="M1 1h10l4 4v11H1z" fill="#c458aa"/><path d="M11 0v5h5z" fill="#fff"/><path d="M13 0.3v4.4M10.8 2.5h4.4M11.5 1l3 3M14.5 1l-3 3" stroke="#8a8a8a" stroke-width="0.9"/></svg>
<div class="t" style="left:95px;top:554px;font-size:12px;color:#111">Electric Field (es) 1<i style="letter-spacing:-0.2px"> {pg6}</i></div>
<svg class="a" style="left:57px;top:576px;" width="10" height="8" viewBox="0 0 10 8"><path d="M1 2l4 4 4-4" stroke="#222" stroke-width="1.3" fill="none"/></svg>
<svg class="a" style="left:73px;top:572px;" width="16" height="16" viewBox="0 0 16 16"><path d="M1 8c2.5-6 5-5 7 0s5 5 7 0" stroke="#c877b6" stroke-width="1.1" fill="none"/></svg>
<div class="t" style="left:95px;top:572px;font-size:12px;color:#111">Total Stored Energy (pze1)<i style="letter-spacing:-0.2px"> {pg7}</i></div>
<svg class="a" style="left:93px;top:590px;" width="16" height="16" viewBox="0 0 16 16"><circle cx="8" cy="8" r="7" stroke="#888" stroke-width="1.1" fill="none"/><path d="M4 4v8h8" stroke="#888" stroke-width="1.1" fill="none"/><path d="M4.5 7c2 0 3 4 7 3.5" stroke="#888" stroke-width="1" fill="none"/></svg>
<div class="t" style="left:115px;top:590px;font-size:12px;color:#111">Global 1<i style="letter-spacing:-0.2px"> {glob1}</i></div>
<svg class="a" style="left:58px;top:611px;" width="8" height="10" viewBox="0 0 8 10"><path d="M2 1l4 4-4 4" stroke="#555" stroke-width="1.2" fill="none"/></svg>
<svg class="a" style="left:73px;top:608px;" width="16" height="16" viewBox="0 0 16 16"><path d="M1 8c2.5-6 5-5 7 0s5 5 7 0" stroke="#c877b6" stroke-width="1.1" fill="none"/></svg>
<div class="t" style="left:95px;top:608px;font-size:12px;color:#111">Admittance<i style="letter-spacing:-0.2px"> {pg8}</i></div>
<svg class="a" style="left:58px;top:629px;" width="8" height="10" viewBox="0 0 8 10"><path d="M2 1l4 4-4 4" stroke="#555" stroke-width="1.2" fill="none"/></svg>
<svg class="a" style="left:73px;top:626px;" width="16" height="16" viewBox="0 0 16 16"><path d="M1 9c2.5-6 5-5 7 0s5 5 7 0" stroke="#c877b6" stroke-width="1.1" fill="none"/><path d="M12.5 0.5v5M10 3h5M10.7 1.2l3.6 3.6M14.3 1.2l-3.6 3.6" stroke="#777" stroke-width="1"/></svg>
<div class="t" style="left:95px;top:626px;font-size:12px;color:#111">Quality Factor<i style="letter-spacing:-0.2px"> {pg9}</i></div>
<svg class="a" style="left:58px;top:647px;" width="8" height="10" viewBox="0 0 8 10"><path d="M2 1l4 4-4 4" stroke="#555" stroke-width="1.2" fill="none"/></svg>
<svg class="a" style="left:73px;top:644px;" width="16" height="16" viewBox="0 0 16 16"><path d="M1 3l2 -2v13l-2 2z" fill="#aaa"/><rect x="2.5" y="2.5" width="9" height="11" fill="#fff" stroke="#888"/><rect x="5" y="4.5" width="9" height="11" fill="#fff" stroke="#888"/><path d="M7 7h5M7 9.5h5M7 12h5" stroke="#c0469d" stroke-width="1.1"/><path d="M12.5 0.5v4M10.5 2.5h4M11 1l3 3M14 1l-3 3" stroke="#777" stroke-width="0.9"/></svg>
<div class="t" style="left:95px;top:644px;font-size:12px;color:#111">Eigenfrequencies (Study 1)<i style="letter-spacing:-0.2px"> {std1EvgFrq}</i></div>
<svg class="a" style="left:58px;top:665px;" width="8" height="10" viewBox="0 0 8 10"><path d="M2 1l4 4-4 4" stroke="#555" stroke-width="1.2" fill="none"/></svg>
<svg class="a" style="left:73px;top:662px;" width="16" height="16" viewBox="0 0 16 16"><path d="M1 3l2 -2v13l-2 2z" fill="#aaa"/><rect x="2.5" y="2.5" width="9" height="11" fill="#fff" stroke="#888"/><rect x="5" y="4.5" width="9" height="11" fill="#fff" stroke="#888"/><path d="M7 7h5M7 9.5h5M7 12h5" stroke="#c0469d" stroke-width="1.1"/><path d="M12.5 0.5v4M10.5 2.5h4M11 1l3 3M14 1l-3 3" stroke="#777" stroke-width="0.9"/></svg>
<div class="t" style="left:95px;top:662px;font-size:12px;color:#111">Participation Factors (Study 1)<i style="letter-spacing:-0.2px"> {std1mpf1}</i></div>
<svg class="a" style="left:73px;top:680px;" width="16" height="16" viewBox="0 0 16 16"><path d="M1.5 5.5h13v9h-13z" stroke="#c0469d" stroke-width="1.2" fill="#f6e0ef"/><path d="M1.5 5.5l3-3h9l1 3" stroke="#c0469d" stroke-width="1.2" fill="none"/><path d="M4 8h8v4H4z" stroke="#c0469d" stroke-width="1" fill="none"/></svg>
<div class="t" style="left:95px;top:680px;font-size:12px;color:#111">Export<i style="letter-spacing:-0.2px"></i></div>
<svg class="a" style="left:73px;top:698px;" width="16" height="16" viewBox="0 0 16 16"><path d="M1.5 3.5h10v11h-10z" stroke="#c0469d" stroke-width="1.2" fill="#fff"/><path d="M3.5 7h5M3.5 9.5h4" stroke="#c0469d" stroke-width="1"/><path d="M6 11l1-3 7-7 2 2-7 7z" fill="#c0469d"/></svg>
<div class="t" style="left:95px;top:698px;font-size:12px;color:#111">Reports<i style="letter-spacing:-0.2px"></i></div>
<div class="t" style="left:6px;top:1030px;font-size:12px;color:#3a3a3a;letter-spacing:-0.2px">Messages</div>
<div class="a" style="left:6px;top:1047px;width:51px;height:2px;background:#c6c6c6"></div>
<div class="t" style="left:69px;top:1030px;font-size:12px;color:#3a3a3a;letter-spacing:-0.2px">Progress</div>
<div class="a" style="left:69px;top:1047px;width:45px;height:2px;background:#c6c6c6"></div>
<div class="t" style="left:126px;top:1030px;font-size:12px;color:#3a3a3a;letter-spacing:-0.2px">Log</div>
<div class="a" style="left:126px;top:1047px;width:20px;height:2px;background:#c6c6c6"></div>
<div class="t" style="left:158px;top:1030px;font-size:12px;color:#3a3a3a;letter-spacing:-0.2px">Table 1</div>
<div class="a" style="left:158px;top:1047px;width:36px;height:2px;background:#c6c6c6"></div>
<div class="t" style="left:1257px;top:1056px;font-size:11.5px;color:#222;letter-spacing:-0.35px">1.9 GB | 2.06 GB</div>
<div class="t" style="left:349px;top:185px;font-size:21px;line-height:26px;color:#2f5ea4">Settings</div>
<svg class="a" style="left:647px;top:191px;" width="12" height="10" viewBox="0 0 12 10"><path d="M1.5 3l4.5 4.5L10.5 3" stroke="#aaa" stroke-width="1.1" fill="none"/></svg>
<svg class="a" style="left:665px;top:190px;" width="12" height="12" viewBox="0 0 12 12"><path d="M1 1.5h10v9H1z" stroke="#999" stroke-width="1.1" fill="none"/><rect x="1" y="1" width="10" height="2.2" fill="#999"/></svg>
<svg class="a" style="left:683px;top:189px;" width="10" height="14" viewBox="0 0 10 14"><path d="M2.5 1h5M3.5 1v6M6.5 1v6M1.5 7h7M5 7v6" stroke="#999" stroke-width="1.2" fill="none"/></svg>
<div class="t" style="left:349px;top:213.5px;font-size:13px;color:#3b63a6;">Global</div>
<svg class="a" style="left:350px;top:235px;" width="16" height="13" viewBox="0 0 16 13"><rect x="0.5" y="0.5" width="15" height="12" fill="#fff" stroke="#888"/><path d="M0.5 2.5h15" stroke="#888"/><rect x="2" y="4" width="12" height="7" fill="#c24fa8"/><circle cx="5" cy="7.5" r="2.3" fill="#f3d6ea"/><path d="M3.8 7.5h2.5M5.2 6.3l1.2 1.2-1.2 1.2" stroke="#c24fa8" stroke-width="0.9" fill="none"/></svg>
<div class="t" style="left:370px;top:234.0px;font-size:12px;color:#111;">Plot</div>
<div class="a" style="left:684px;top:254px;width:17px;height:767px;background:linear-gradient(90deg,#f4f4f4,#f9f9f9)"></div>
<div class="a" style="left:684px;top:272px;width:17px;height:668px;background:#e8e8e8"></div>
<svg class="a" style="left:688px;top:259px;" width="10" height="7" viewBox="0 0 10 7"><path d="M1 5.5l4-4 4 4" stroke="#cfcfcf" stroke-width="1.1" fill="none"/></svg>
<svg class="a" style="left:688px;top:1009px;" width="10" height="7" viewBox="0 0 10 7"><path d="M1 1.5l4 4 4-4" stroke="#cfcfcf" stroke-width="1.1" fill="none"/></svg>
<div class="t" style="left:348px;top:267.0px;font-size:12px;color:#111;">Label:</div>
<div class="a" style="left:389px;top:266px;width:262px;height:18px;background:#fff;border:1px solid #d6d6d6"></div>
<div class="t" style="left:392px;top:267.0px;font-size:12px;color:#111;">Global 1</div>
<div class="a" style="left:659px;top:264px;width:20px;height:22px;background:#eeeeee;border:1px solid #d9d9d9;border-radius:2px"></div>
<svg class="a" style="left:661px;top:267px;" width="16" height="16" viewBox="0 0 16 16"><path d="M1.5 1.5h13v12h-13z" stroke="#666" stroke-width="1.1" fill="#fff"/><path d="M1.5 4h13" stroke="#666" stroke-width="1.1"/><path d="M6 7h7M6 10h7" stroke="#1f9a7a" stroke-width="1.2"/><path d="M2 14l3.5-3.5M2.5 10.5h3v3" stroke="#1f9a7a" stroke-width="1.2" fill="none"/></svg>
<div class="a" style="left:343px;top:295px;width:341px;height:1.2px;background:#dedede"></div>
<svg class="a" style="left:349px;top:305.5px;" width="10" height="8" viewBox="0 0 10 8"><path d="M1 2l4 4 4-4" stroke="#3a5e9e" stroke-width="1.3" fill="none"/></svg>
<div class="t" style="left:369px;top:302.0px;font-size:13.5px;color:#3a5e9e;">Data</div>
<div class="t" style="left:348px;top:334.5px;font-size:12px;color:#111;">Dataset:</div>
<div class="a" style="left:400px;top:332px;width:251px;height:21px;background:linear-gradient(#f3f3f3,#e9e9e9);border:1px solid #d9d9d9;border-radius:3px"></div>
<div class="t" style="left:413px;top:335.0px;font-size:12px;color:#111;">From parent</div>
<svg class="a" style="left:636.0px;top:340px;" width="9" height="6" viewBox="0 0 9 6"><path d="M0.5 0.5h8L4.5 5.5z" fill="#111"/></svg>
<div class="a" style="left:659px;top:331px;width:20px;height:22px;background:#eeeeee;border:1px solid #d9d9d9;border-radius:2px"></div>
<svg class="a" style="left:661px;top:334px;" width="16" height="16" viewBox="0 0 16 16"><path d="M1 2h6M1 5h6M1 8h4M1 11h4M1 14h6" stroke="#555" stroke-width="1"/><path d="M1 11h4M1 14h6" stroke="#d04a25" stroke-width="1"/><path d="M9 8h5v6" stroke="#2f86cf" stroke-width="1.3" fill="none"/><path d="M8 8l3-3v6z" fill="#2f86cf"/></svg>
<div class="a" style="left:343px;top:364px;width:341px;height:1.2px;background:#dedede"></div>
<svg class="a" style="left:349px;top:374.5px;" width="10" height="8" viewBox="0 0 10 8"><path d="M1 2l4 4 4-4" stroke="#3a5e9e" stroke-width="1.3" fill="none"/></svg>
<div class="t" style="left:369px;top:371.0px;font-size:13.5px;color:#3a5e9e;">y-Axis Data</div>
<svg class="a" style="left:560px;top:372.5px;" width="16" height="10" viewBox="0 0 16 10"><path d="M3 5h12" stroke="#2f7fc1" stroke-width="1.5"/><path d="M0.5 5L6 1v8z" fill="#2f7fc1"/></svg>
<svg class="a" style="left:583px;top:372.5px;" width="16" height="10" viewBox="0 0 16 10"><path d="M1 5h12" stroke="#2f7fc1" stroke-width="1.5"/><path d="M15.5 5L10 1v8z" fill="#2f7fc1"/></svg>
<svg class="a" style="left:606.5px;top:370.5px;" width="14" height="14" viewBox="0 0 14 14"><path d="M7 0v14M0 7h14" stroke="#2f7fc1" stroke-width="1.4"/></svg>
<svg class="a" style="left:626.0px;top:375px;" width="9" height="6" viewBox="0 0 9 6"><path d="M0.5 0.5h8L4.5 5.5z" fill="#111"/></svg>
<svg class="a" style="left:645px;top:368.5px;" width="18" height="18" viewBox="0 0 18 18"><path d="M1.5 6.5h14v6h-14z" stroke="#2f7fc1" stroke-width="1.2" fill="#fff"/><rect x="3.5" y="8.5" width="7" height="2" fill="#2f7fc1"/><path d="M11 1v16M9 1h4M9 17h4" stroke="#2f7fc1" stroke-width="1.2"/></svg>
<svg class="a" style="left:666.0px;top:375px;" width="9" height="6" viewBox="0 0 9 6"><path d="M0.5 0.5h8L4.5 5.5z" fill="#111"/></svg>
<div class="a" style="left:348px;top:400px;width:331px;height:200px;background:#fff;border:1px solid #d0d0d0"></div>
<div class="a" style="left:349px;top:401px;width:329px;height:27px;background:#efefef"></div>
<div class="a" style="left:478px;top:401px;width:1.5px;height:67px;background:#cfcfcf"></div>
<div class="a" style="left:538px;top:401px;width:1.5px;height:67px;background:#cfcfcf"></div>
<div class="a" style="left:349px;top:447px;width:329px;height:1.5px;background:#cfcfcf"></div>
<div class="a" style="left:349px;top:467.5px;width:329px;height:1.5px;background:#cfcfcf"></div>
<svg class="a" style="left:351px;top:403px;" width="12" height="10" viewBox="0 0 12 10"><path d="M0.5 1l4.5 4-4.5 4zM6 1l4.5 4L6 9z" fill="#111"/></svg>
<div class="t" style="left:367px;top:409.5px;font-size:12px;color:#111;">Expression</div>
<div class="t" style="left:484px;top:409.5px;font-size:12px;color:#111;">Unit</div>
<div class="t" style="left:544px;top:409.5px;font-size:12px;color:#111;">Description</div>
<div class="t" style="left:352px;top:430.5px;font-size:12px;color:#111;">solid.Wh_tot</div>
<div class="t" style="left:482px;top:430.5px;font-size:12px;color:#111;">J</div>
<div class="t" style="left:542px;top:430.5px;font-size:12px;color:#111;">Total stored energy</div>
<div class="a" style="left:349px;top:580px;width:329px;height:17px;background:#f7f7f7"></div>
<div class="a" style="left:366px;top:580px;width:284px;height:17px;background:#e6e6e6"></div>
<svg class="a" style="left:354px;top:584px;" width="8" height="10" viewBox="0 0 8 10"><path d="M6 1L2 5l4 4" stroke="#c8c8c8" stroke-width="1.1" fill="none"/></svg>
<svg class="a" style="left:665px;top:584px;" width="8" height="10" viewBox="0 0 8 10"><path d="M2 1l4 4-4 4" stroke="#c8c8c8" stroke-width="1.1" fill="none"/></svg>
<div class="a" style="left:348px;top:597px;width:331px;height:3px;background:#d2d2d2"></div>
<svg class="a" style="left:353px;top:606px;" width="10" height="16" viewBox="0 0 10 16"><path d="M5 3v13" stroke="#a6a6a6" stroke-width="1.3"/><path d="M5 0.5L1 6h8z" fill="#a6a6a6"/></svg>
<svg class="a" style="left:376px;top:606px;" width="10" height="16" viewBox="0 0 10 16"><path d="M5 0v13" stroke="#a6a6a6" stroke-width="1.3"/><path d="M5 15.5L1 10h8z" fill="#a6a6a6"/></svg>
<svg class="a" style="left:397px;top:606px;" width="16" height="16" viewBox="0 0 16 16"><path d="M4 2h11M4 6.5h11M4 11h6M0 2h2M0 6.5h2M0 11h2" stroke="#a6a6a6" stroke-width="1.4"/><path d="M11 10l4 5M15 10l-4 5" stroke="#a6a6a6" stroke-width="1"/></svg>
<svg class="a" style="left:421px;top:605px;" width="14" height="18" viewBox="0 0 14 18"><path d="M2 1l5 8" stroke="#777" stroke-width="1.2"/><path d="M5 9l4-1 4 8-5 1z" fill="#e8a23a"/></svg>
<svg class="a" style="left:442px;top:606px;" width="18" height="15" viewBox="0 0 18 15"><path d="M1 2h5l2 2h6v2H4L1 13z" fill="#e8a23a"/><path d="M4 7h13l-3 6H1z" fill="#f0b24a"/></svg>
<svg class="a" style="left:464.0px;top:611px;" width="9" height="6" viewBox="0 0 9 6"><path d="M0.5 0.5h8L4.5 5.5z" fill="#111"/></svg>
<svg class="a" style="left:484px;top:606px;" width="16" height="16" viewBox="0 0 16 16"><path d="M1.5 1.5h12l1 1v12h-13z" stroke="#2f7fc1" stroke-width="1.3" fill="none"/><path d="M4 1.5v5h8v-5M4.5 14.5v-4h7v4" stroke="#2f7fc1" stroke-width="1.2" fill="none"/></svg>
<svg class="a" style="left:505.5px;top:605px;" width="18" height="18" viewBox="0 0 18 18"><path d="M1.5 6.5h14v6h-14z" stroke="#aaa" stroke-width="1.2" fill="#fff"/><rect x="3.5" y="8.5" width="2" height="2" fill="#aaa"/><rect x="6.5" y="8.5" width="2" height="2" fill="#aaa"/><path d="M11 1v16M9 1h4M9 17h4" stroke="#aaa" stroke-width="1.2"/></svg>
<svg class="a" style="left:527.0px;top:611px;" width="9" height="6" viewBox="0 0 9 6"><path d="M0.5 0.5h8L4.5 5.5z" fill="#555"/></svg>
<div class="t" style="left:348px;top:627.0px;font-size:12px;color:#111;">Expression:</div>
<div class="a" style="left:348px;top:648px;width:331px;height:18px;border:1px solid #e6e6e6"></div>
<div class="t" style="left:348px;top:672.0px;font-size:12px;color:#111;">Description:</div>
<div class="a" style="left:348px;top:693px;width:331px;height:18px;border:1px solid #e6e6e6"></div>
<div class="a" style="left:348px;top:724.5px;width:9px;height:1.3px;background:#dadada"></div>
<div class="t" style="left:361px;top:717.0px;font-size:12px;color:#111;">Parameters</div>
<div class="a" style="left:423px;top:724.5px;width:256px;height:1.3px;background:#dadada"></div>
<div class="a" style="left:348px;top:739px;width:331px;height:99px;background:#fff;border:1px solid #d0d0d0"></div>
<div class="a" style="left:349px;top:740px;width:329px;height:27px;background:#efefef"></div>
<div class="a" style="left:349px;top:767px;width:79px;height:61px;background:#f3f3f3"></div>
<div class="a" style="left:489px;top:767px;width:40px;height:61px;background:#f3f3f3"></div>
<div class="a" style="left:529px;top:767px;width:149px;height:61px;background:#f3f3f3"></div>
<div class="a" style="left:428px;top:740px;width:1.5px;height:88px;background:#cdcdcd"></div>
<div class="a" style="left:488px;top:740px;width:1.5px;height:88px;background:#cdcdcd"></div>
<div class="a" style="left:528px;top:740px;width:1.5px;height:88px;background:#cdcdcd"></div>
<div class="a" style="left:349px;top:786px;width:329px;height:1.5px;background:#cdcdcd"></div>
<div class="a" style="left:349px;top:807px;width:329px;height:1.5px;background:#cdcdcd"></div>
<div class="a" style="left:349px;top:828px;width:329px;height:1.5px;background:#cdcdcd"></div>
<div class="a" style="left:348px;top:835px;width:331px;height:3px;background:#d2d2d2"></div>
<svg class="a" style="left:351px;top:742px;" width="12" height="10" viewBox="0 0 12 10"><path d="M0.5 1l4.5 4-4.5 4zM6 1l4.5 4L6 9z" fill="#111"/></svg>
<div class="t" style="left:367px;top:748.5px;font-size:12px;color:#111;">Name</div>
<div class="t" style="left:434px;top:748.5px;font-size:12px;color:#111;">Value</div>
<div class="t" style="left:494px;top:748.5px;font-size:12px;color:#111;">Unit</div>
<div class="t" style="left:534px;top:748.5px;font-size:12px;color:#111;">Description</div>
<div class="t" style="left:352px;top:769.0px;font-size:12px;color:#111;">solid.refpntx</div>
<div class="t" style="left:432px;top:769.0px;font-size:12px;color:#111;">0</div>
<div class="t" style="left:492px;top:769.0px;font-size:12px;color:#111;">m</div>
<div class="t" style="left:532px;top:769.0px;font-size:12px;color:#111;letter-spacing:-0.25px">Reference point for mom...</div>
<div class="t" style="left:352px;top:790.0px;font-size:12px;color:#111;">solid.refpnty</div>
<div class="t" style="left:432px;top:790.0px;font-size:12px;color:#111;">0</div>
<div class="t" style="left:492px;top:790.0px;font-size:12px;color:#111;">m</div>
<div class="t" style="left:532px;top:790.0px;font-size:12px;color:#111;letter-spacing:-0.25px">Reference point for mom...</div>
<div class="t" style="left:352px;top:811.0px;font-size:12px;color:#111;">solid.refpntz</div>
<div class="t" style="left:432px;top:811.0px;font-size:12px;color:#111;">0</div>
<div class="t" style="left:492px;top:811.0px;font-size:12px;color:#111;">m</div>
<div class="t" style="left:532px;top:811.0px;font-size:12px;color:#111;letter-spacing:-0.25px">Reference point for mom...</div>
<svg class="a" style="left:350px;top:844px;" width="18" height="18" viewBox="0 0 18 18"><path d="M1.5 6.5h14v6h-14z" stroke="#aaa" stroke-width="1.2" fill="#fff"/><rect x="3.5" y="8.5" width="2" height="2" fill="#aaa"/><rect x="6.5" y="8.5" width="2" height="2" fill="#aaa"/><path d="M11 1v16M9 1h4M9 17h4" stroke="#aaa" stroke-width="1.2"/></svg>
<svg class="a" style="left:371.0px;top:850px;" width="9" height="6" viewBox="0 0 9 6"><path d="M0.5 0.5h8L4.5 5.5z" fill="#555"/></svg>
<div class="a" style="left:343px;top:871px;width:341px;height:1.2px;background:#dedede"></div>
<svg class="a" style="left:350px;top:880.5px;" width="8" height="10" viewBox="0 0 8 10"><path d="M2 1l4 4-4 4" stroke="#222" stroke-width="1.3" fill="none"/></svg>
<div class="t" style="left:369px;top:878.0px;font-size:13.5px;color:#3a5e9e;">Title</div>
<div class="a" style="left:343px;top:900px;width:341px;height:1.2px;background:#dedede"></div>
<svg class="a" style="left:349px;top:910.5px;" width="10" height="8" viewBox="0 0 10 8"><path d="M1 2l4 4 4-4" stroke="#3a5e9e" stroke-width="1.3" fill="none"/></svg>
<div class="t" style="left:369px;top:907.0px;font-size:13.5px;color:#3a5e9e;">x-Axis Data</div>
<svg class="a" style="left:605px;top:905.5px;" width="18" height="18" viewBox="0 0 18 18"><path d="M1.5 6.5h14v6h-14z" stroke="#2f7fc1" stroke-width="1.2" fill="#fff"/><rect x="3.5" y="8.5" width="2" height="2" fill="#2f7fc1"/><rect x="6.5" y="8.5" width="2" height="2" fill="#2f7fc1"/><path d="M11 1v16M9 1h4M9 17h4" stroke="#2f7fc1" stroke-width="1.2"/></svg>
<svg class="a" style="left:626.0px;top:911.5px;" width="9" height="6" viewBox="0 0 9 6"><path d="M0.5 0.5h8L4.5 5.5z" fill="#111"/></svg>
<svg class="a" style="left:645px;top:905.5px;" width="18" height="18" viewBox="0 0 18 18"><path d="M1.5 6.5h14v6h-14z" stroke="#2f7fc1" stroke-width="1.2" fill="#fff"/><rect x="3.5" y="8.5" width="7" height="2" fill="#2f7fc1"/><path d="M11 1v16M9 1h4M9 17h4" stroke="#2f7fc1" stroke-width="1.2"/></svg>
<svg class="a" style="left:666.0px;top:911.5px;" width="9" height="6" viewBox="0 0 9 6"><path d="M0.5 0.5h8L4.5 5.5z" fill="#111"/></svg>
<div class="t" style="left:348px;top:936.0px;font-size:12px;color:#111;">Parameter:</div>
<div class="a" style="left:348px;top:957px;width:331px;height:21px;background:linear-gradient(#f3f3f3,#e9e9e9);border:1px solid #d9d9d9;border-radius:3px"></div>
<div class="t" style="left:361px;top:959.5px;font-size:12px;color:#111;">Parameter value</div>
<svg class="a" style="left:663.5px;top:965px;" width="9" height="6" viewBox="0 0 9 6"><path d="M0.5 0.5h8L4.5 5.5z" fill="#111"/></svg>
<div class="t" style="left:348px;top:984.0px;font-size:12px;color:#111;">Unit:</div>
<div class="a" style="left:348px;top:1005px;width:331px;height:22px;background:linear-gradient(#f3f3f3,#e9e9e9);border:1px solid #d9d9d9;border-radius:3px"></div>
<div class="t" style="left:361px;top:1008.0px;font-size:12px;color:#111;">Hz</div>
<svg class="a" style="left:663.5px;top:1013px;" width="9" height="6" viewBox="0 0 9 6"><path d="M0.5 0.5h8L4.5 5.5z" fill="#111"/></svg>
<div class="a" style="left:340px;top:1021px;width:370px;height:10px;background:#efefef"></div>
<div class="t" style="left:715px;top:185px;font-size:21px;line-height:26px;color:#2f5ea4">Graphics</div>
<svg class="a" style="left:1858px;top:191px;" width="12" height="10" viewBox="0 0 12 10"><path d="M1.5 3l4.5 4.5L10.5 3" stroke="#aaa" stroke-width="1.1" fill="none"/></svg>
<svg class="a" style="left:1877px;top:190px;" width="12" height="12" viewBox="0 0 12 12"><path d="M1 1.5h10v9H1z" stroke="#999" stroke-width="1.1" fill="none"/><rect x="1" y="1" width="10" height="2.2" fill="#999"/></svg>
<svg class="a" style="left:1895px;top:189px;" width="10" height="14" viewBox="0 0 10 14"><path d="M2.5 1h5M3.5 1v6M6.5 1v6M1.5 7h7M5 7v6" stroke="#999" stroke-width="1.2" fill="none"/></svg>
<svg class="a" style="left:717px;top:215.5px;" width="16" height="16" viewBox="0 0 16 16"><circle cx="6.5" cy="6.5" r="5.3" stroke="#2f7fc1" stroke-width="1.3" fill="none"/><path d="M10.3 10.3l4 4" stroke="#2f7fc1" stroke-width="2.2"/><path d="M3.8 6.5h5.4" stroke="#2f7fc1" stroke-width="1.3"/><path d="M6.5 3.8v5.4" stroke="#2f7fc1" stroke-width="1.3"/></svg>
<svg class="a" style="left:740px;top:215.5px;" width="16" height="16" viewBox="0 0 16 16"><circle cx="6.5" cy="6.5" r="5.3" stroke="#2f7fc1" stroke-width="1.3" fill="none"/><path d="M10.3 10.3l4 4" stroke="#2f7fc1" stroke-width="2.2"/><path d="M3.8 6.5h5.4" stroke="#2f7fc1" stroke-width="1.3"/></svg>
<svg class="a" style="left:761px;top:215.5px;" width="18" height="16" viewBox="0 0 18 16"><path d="M1 7.5h4M1 7.5v7h7v-3" stroke="#2f7fc1" stroke-width="1" stroke-dasharray="1.5 1" fill="none"/><circle cx="9" cy="6" r="4.8" stroke="#2f7fc1" stroke-width="1.3" fill="none"/><path d="M12.5 9.5l4 4.5" stroke="#2f7fc1" stroke-width="2.2"/><path d="M6.5 6h5M9 3.5v5" stroke="#2f7fc1" stroke-width="1.2"/></svg>
<svg class="a" style="left:783.0px;top:221px;" width="9" height="6" viewBox="0 0 9 6"><path d="M0.5 0.5h8L4.5 5.5z" fill="#111"/></svg>
<svg class="a" style="left:802px;top:215.5px;" width="16" height="16" viewBox="0 0 16 16"><rect x="0.5" y="0.5" width="15" height="15" stroke="#666" fill="#fff" stroke-width="1.1"/><path d="M8 3v10M3 8h10" stroke="#2f7fc1" stroke-width="1.2"/><path d="M8 2l-2 2.5h4zM8 14l-2-2.5h4zM2 8l2.5-2v4zM14 8l-2.5-2v4z" fill="#2f7fc1"/></svg>
<div class="a" style="left:826.5px;top:216px;width:1px;height:16px;background:#d8d8d8"></div>
<svg class="a" style="left:834px;top:215.5px;" width="16" height="16" viewBox="0 0 16 16"><path d="M1 1v14M5 1v14M9 1v14M13 1v14" stroke="#555" stroke-width="1" stroke-dasharray="1 1"/><path d="M6 1v13M10 1v13M14 1v13" stroke="#2f7fc1" stroke-width="1.2"/><path d="M0 15h16" stroke="#555" stroke-dasharray="1 1"/></svg>
<div class="a" style="left:855px;top:214.5px;width:19.5px;height:19px;background:#cfe3f6;border:1px solid #a9cbec;border-radius:2px"></div>
<div class="a" style="left:878.5px;top:214.5px;width:19.5px;height:19px;background:#cfe3f6;border:1px solid #a9cbec;border-radius:2px"></div>
<div class="a" style="left:901.5px;top:214.5px;width:19.5px;height:19px;background:#cfe3f6;border:1px solid #a9cbec;border-radius:2px"></div>
<svg class="a" style="left:857px;top:215.5px;" width="16" height="16" viewBox="0 0 16 16"><path d="M1 1v14" stroke="#555" stroke-dasharray="1 1"/><path d="M2 3h13M2 6h13M2 9h13M2 12h13" stroke="#2f7fc1" stroke-width="1.2"/><path d="M1 15h15" stroke="#555" stroke-dasharray="1 1"/></svg>
<svg class="a" style="left:880px;top:215.5px;" width="16" height="16" viewBox="0 0 16 16"><rect x="1.5" y="1.5" width="13" height="13" stroke="#555" stroke-width="1.2" fill="#fff"/><rect x="9" y="3.5" width="3" height="9.5" fill="#e07030"/><rect x="9" y="3.5" width="3" height="4" fill="#2f86cf"/></svg>
<svg class="a" style="left:903px;top:215.5px;" width="16" height="16" viewBox="0 0 16 16"><path d="M1.5 1.5h13v9h-7l-3 3v-3h-3z" stroke="#555" stroke-width="1.2" fill="#fff"/><path d="M4.5 4.5h7M4.5 7h7" stroke="#555" stroke-width="1"/></svg>
<div class="a" style="left:926px;top:216px;width:1px;height:16px;background:#d8d8d8"></div>
<svg class="a" style="left:934px;top:215.5px;" width="16" height="16" viewBox="0 0 16 16"><path d="M8 1C3 1 1 5 1 8c0 4 3 7 6 7 2 0 2-2 1-3-1-1 0-3 2-3h2c2 0 3-1 3-3 0-3-3-5-7-5z" fill="#f4eef0" stroke="#888" stroke-width="1"/><circle cx="5" cy="5" r="1.3" fill="#888"/><circle cx="10" cy="4" r="1.3" fill="#2f86cf"/><circle cx="4" cy="10" r="1.3" fill="#d04060"/><circle cx="12" cy="7" r="1.3" fill="#e0a030"/></svg>
<svg class="a" style="left:954.0px;top:221px;" width="9" height="6" viewBox="0 0 9 6"><path d="M0.5 0.5h8L4.5 5.5z" fill="#111"/></svg>
<div class="a" style="left:974.5px;top:216px;width:1px;height:16px;background:#d8d8d8"></div>
<svg class="a" style="left:982px;top:215.5px;" width="16" height="16" viewBox="0 0 16 16"><circle cx="8" cy="8" r="7" fill="#2f7fc1"/><circle cx="8" cy="8" r="3" fill="#f9fafb"/><path d="M8 1l3 5M15 8l-5 2M8 15l-2-5M1 8l5-2" stroke="#f9fafb" stroke-width="1.4"/></svg>
<svg class="a" style="left:1003.0px;top:221px;" width="9" height="6" viewBox="0 0 9 6"><path d="M0.5 0.5h8L4.5 5.5z" fill="#111"/></svg>
<svg class="a" style="left:1022px;top:216.5px;" width="18" height="14" viewBox="0 0 18 14"><path d="M1 3h4l2-2h4l2 2h4v10H1z" fill="#2f7fc1"/><circle cx="9" cy="8" r="3.2" fill="#f9fafb"/><circle cx="9" cy="8" r="1.8" fill="#2f7fc1"/></svg>
<svg class="a" style="left:1046px;top:215.5px;" width="16" height="16" viewBox="0 0 16 16"><path d="M4 1.5h8v4H4z" stroke="#2f7fc1" stroke-width="1.2" fill="none"/><path d="M1 5.5h14v7h-3v2H4v-2H1z" stroke="#2f7fc1" stroke-width="1.2" fill="#fff"/><path d="M5 10h6M5 12.5h6" stroke="#2f7fc1" stroke-width="1"/></svg>
<div class="a" style="left:709px;top:237px;width:1204px;height:784px;background:linear-gradient(#fafbfc 0px,#fdfdfe 8px,#fff 20px)"></div>
<svg class="a" style="left:1890px;top:243px;" width="16" height="16" viewBox="0 0 16 16"><circle cx="8" cy="8" r="7.5" fill="#eef0f5"/><rect x="2.5" y="3.5" width="11" height="8.5" rx="2" fill="#1d3d8a"/><rect x="4.5" y="5.5" width="7" height="5" rx="1" fill="#e8d040"/><rect x="4.5" y="5.5" width="3" height="5" fill="#52b0e0"/></svg>
<svg class="a" style="left:0;top:0" width="1920" height="1080" viewBox="0 0 1920 1080"><path d="M849.0 283.0V978.6 M959.2 283.0V978.6 M1069.4 283.0V978.6 M1179.7 283.0V978.6 M1289.9 283.0V978.6 M1400.1 283.0V978.6 M1510.3 283.0V978.6 M1620.5 283.0V978.6 M1730.8 283.0V978.6 M1841.0 283.0V978.6 M783.3 947.0H1906.8 M783.3 924.3H1906.8 M783.3 908.2H1906.8 M783.3 895.8H1906.8 M783.3 885.6H1906.8 M783.3 876.9H1906.8 M783.3 869.5H1906.8 M783.3 862.9H1906.8 M783.3 857.0H1906.8 M783.3 818.2H1906.8 M783.3 795.6H1906.8 M783.3 779.5H1906.8 M783.3 767.0H1906.8 M783.3 756.8H1906.8 M783.3 748.2H1906.8 M783.3 740.7H1906.8 M783.3 734.1H1906.8 M783.3 728.2H1906.8 M783.3 689.5H1906.8 M783.3 666.8H1906.8 M783.3 650.7H1906.8 M783.3 638.3H1906.8 M783.3 628.1H1906.8 M783.3 619.4H1906.8 M783.3 612.0H1906.8 M783.3 605.4H1906.8 M783.3 599.5H1906.8 M783.3 560.7H1906.8 M783.3 538.1H1906.8 M783.3 522.0H1906.8 M783.3 509.5H1906.8 M783.3 499.3H1906.8 M783.3 490.7H1906.8 M783.3 483.2H1906.8 M783.3 476.6H1906.8 M783.3 470.8H1906.8 M783.3 432.0H1906.8 M783.3 409.3H1906.8 M783.3 393.2H1906.8 M783.3 380.8H1906.8 M783.3 370.6H1906.8 M783.3 361.9H1906.8 M783.3 354.5H1906.8 M783.3 347.9H1906.8 M783.3 342.0H1906.8 M783.3 303.2H1906.8" stroke="#e3e3e3" stroke-width="1.5" fill="none"/>
<path d="M849.0 283.0v5.5M849.0 978.6v-5.5 M959.2 283.0v5.5M959.2 978.6v-5.5 M1069.4 283.0v5.5M1069.4 978.6v-5.5 M1179.7 283.0v5.5M1179.7 978.6v-5.5 M1289.9 283.0v5.5M1289.9 978.6v-5.5 M1400.1 283.0v5.5M1400.1 978.6v-5.5 M1510.3 283.0v5.5M1510.3 978.6v-5.5 M1620.5 283.0v5.5M1620.5 978.6v-5.5 M1730.8 283.0v5.5M1730.8 978.6v-5.5 M1841.0 283.0v5.5M1841.0 978.6v-5.5 M783.3 947.0h5.5M1906.8 947.0h-5.5 M783.3 924.3h5.5M1906.8 924.3h-5.5 M783.3 908.2h5.5M1906.8 908.2h-5.5 M783.3 895.8h5.5M1906.8 895.8h-5.5 M783.3 885.6h5.5M1906.8 885.6h-5.5 M783.3 876.9h5.5M1906.8 876.9h-5.5 M783.3 869.5h5.5M1906.8 869.5h-5.5 M783.3 862.9h5.5M1906.8 862.9h-5.5 M783.3 857.0h5.5M1906.8 857.0h-5.5 M783.3 818.2h5.5M1906.8 818.2h-5.5 M783.3 795.6h5.5M1906.8 795.6h-5.5 M783.3 779.5h5.5M1906.8 779.5h-5.5 M783.3 767.0h5.5M1906.8 767.0h-5.5 M783.3 756.8h5.5M1906.8 756.8h-5.5 M783.3 748.2h5.5M1906.8 748.2h-5.5 M783.3 740.7h5.5M1906.8 740.7h-5.5 M783.3 734.1h5.5M1906.8 734.1h-5.5 M783.3 728.2h5.5M1906.8 728.2h-5.5 M783.3 689.5h5.5M1906.8 689.5h-5.5 M783.3 666.8h5.5M1906.8 666.8h-5.5 M783.3 650.7h5.5M1906.8 650.7h-5.5 M783.3 638.3h5.5M1906.8 638.3h-5.5 M783.3 628.1h5.5M1906.8 628.1h-5.5 M783.3 619.4h5.5M1906.8 619.4h-5.5 M783.3 612.0h5.5M1906.8 612.0h-5.5 M783.3 605.4h5.5M1906.8 605.4h-5.5 M783.3 599.5h5.5M1906.8 599.5h-5.5 M783.3 560.7h5.5M1906.8 560.7h-5.5 M783.3 538.1h5.5M1906.8 538.1h-5.5 M783.3 522.0h5.5M1906.8 522.0h-5.5 M783.3 509.5h5.5M1906.8 509.5h-5.5 M783.3 499.3h5.5M1906.8 499.3h-5.5 M783.3 490.7h5.5M1906.8 490.7h-5.5 M783.3 483.2h5.5M1906.8 483.2h-5.5 M783.3 476.6h5.5M1906.8 476.6h-5.5 M783.3 470.8h5.5M1906.8 470.8h-5.5 M783.3 432.0h5.5M1906.8 432.0h-5.5 M783.3 409.3h5.5M1906.8 409.3h-5.5 M783.3 393.2h5.5M1906.8 393.2h-5.5 M783.3 380.8h5.5M1906.8 380.8h-5.5 M783.3 370.6h5.5M1906.8 370.6h-5.5 M783.3 361.9h5.5M1906.8 361.9h-5.5 M783.3 354.5h5.5M1906.8 354.5h-5.5 M783.3 347.9h5.5M1906.8 347.9h-5.5 M783.3 342.0h5.5M1906.8 342.0h-5.5 M783.3 303.2h5.5M1906.8 303.2h-5.5" stroke="#474747" stroke-width="1.7" fill="none"/>
<rect x="783.3" y="283.0" width="1123.5" height="695.6" stroke="#474747" stroke-width="1.7" fill="none"/>
<path d="M794.8 916.4C800.8 914.5 819.4 908.8 830.8 905.1C842.2 901.3 852.9 897.5 863.2 893.7C873.4 889.9 883.0 886.1 892.2 882.4C901.4 878.6 910.0 874.8 918.2 871.0C926.5 867.3 934.2 863.5 941.6 859.7C949.0 856.0 956.0 852.2 962.6 848.4C969.2 844.7 975.5 840.9 981.4 837.1C987.4 833.3 993.0 829.6 998.3 825.8C1003.7 822.0 1008.7 818.3 1013.5 814.5C1018.3 810.7 1022.8 807.0 1027.1 803.2C1031.4 799.4 1035.5 795.6 1039.4 791.9C1043.2 788.1 1046.9 784.3 1050.3 780.5C1053.8 776.8 1057.1 773.0 1060.2 769.2C1063.3 765.4 1066.2 761.6 1069.0 757.8C1071.8 754.1 1074.4 750.3 1077.0 746.5C1079.5 742.7 1081.8 738.9 1084.1 735.1C1086.3 731.3 1088.4 727.5 1090.5 723.7C1092.5 719.8 1094.4 716.0 1096.2 712.2C1098.0 708.4 1099.7 704.6 1101.4 700.7C1103.0 696.9 1104.5 693.1 1106.0 689.2C1107.4 685.4 1108.8 681.6 1110.1 677.7C1111.4 673.9 1112.7 670.0 1113.9 666.1C1115.0 662.3 1116.1 658.4 1117.2 654.5C1118.3 650.6 1119.3 646.8 1120.2 642.9C1121.2 639.0 1122.0 635.1 1122.9 631.2C1123.7 627.3 1124.5 623.4 1125.3 619.4C1126.1 615.5 1126.8 611.6 1127.5 607.6C1128.2 603.7 1128.8 599.8 1129.4 595.8C1130.0 591.8 1130.6 587.9 1131.2 583.9C1131.7 579.9 1132.3 575.9 1132.7 571.9C1133.2 568.0 1133.7 563.9 1134.2 559.9C1134.6 555.9 1135.0 551.9 1135.4 547.9C1135.8 543.8 1136.2 539.8 1136.6 535.7C1136.9 531.7 1137.3 527.6 1137.6 523.5C1137.9 519.4 1138.2 515.3 1138.5 511.2C1138.8 507.1 1139.0 503.0 1139.3 498.9C1139.6 494.7 1139.8 490.6 1140.0 486.4C1140.3 482.3 1140.5 478.3 1140.7 473.9C1140.9 469.5 1141.2 462.3 1141.3 460.0L1144.9 337.0L1146.5 294.4L1148.2 337.0L1154.3 460.0C1154.5 464.3 1155.0 478.6 1155.4 486.0C1155.8 493.5 1156.2 498.7 1156.6 504.9C1157.1 511.2 1157.5 517.4 1158.0 523.5C1158.5 529.7 1159.1 535.8 1159.7 541.8C1160.2 547.8 1160.8 553.8 1161.5 559.6C1162.1 565.5 1162.8 571.3 1163.6 577.0C1164.3 582.7 1165.1 588.3 1166.0 593.9C1166.8 599.4 1167.7 604.8 1168.7 610.1C1169.7 615.4 1170.7 620.6 1171.8 625.7C1172.9 630.8 1174.1 635.7 1175.3 640.6C1176.6 645.4 1177.9 650.1 1179.3 654.7C1180.8 659.3 1182.3 663.7 1183.9 668.0C1185.6 672.2 1187.3 676.4 1189.2 680.4C1191.0 684.3 1193.0 688.1 1195.1 691.8C1197.2 695.4 1199.9 699.6 1201.9 702.2C1203.9 704.8 1206.2 706.7 1207.1 707.6C1208.2 706.7 1211.9 705.3 1213.8 702.4C1215.7 699.5 1216.8 698.1 1218.5 690.4C1220.2 682.7 1222.5 667.7 1223.7 656.3C1224.9 644.9 1225.2 633.3 1225.9 622.2C1226.6 611.1 1227.7 595.0 1228.1 589.6L1233.0 463.0L1234.7 414.2L1235.8 463.0L1239.3 589.6C1239.4 591.9 1239.6 599.1 1239.8 603.6C1240.0 608.1 1240.2 612.6 1240.4 616.8C1240.6 621.0 1240.8 625.0 1241.0 628.9C1241.3 632.9 1241.5 636.6 1241.7 640.3C1242.0 643.9 1242.3 647.4 1242.5 650.8C1242.8 654.3 1243.1 657.6 1243.4 660.8C1243.7 664.0 1244.1 667.2 1244.4 670.3C1244.7 673.4 1245.1 676.4 1245.5 679.4C1245.9 682.3 1246.3 685.3 1246.7 688.1C1247.1 691.0 1247.6 693.9 1248.1 696.7C1248.5 699.5 1249.0 702.3 1249.6 705.1C1250.1 707.9 1250.6 710.6 1251.2 713.4C1251.8 716.1 1252.4 718.8 1253.1 721.6C1253.7 724.3 1254.4 727.0 1255.1 729.7C1255.9 732.4 1256.6 735.1 1257.4 737.9C1258.3 740.6 1259.1 743.3 1260.0 746.0C1260.9 748.7 1261.8 751.4 1262.8 754.0C1263.8 756.7 1264.9 759.4 1266.0 762.1C1267.1 764.7 1268.3 767.4 1269.5 770.0C1270.8 772.6 1272.1 775.2 1273.4 777.8C1274.8 780.4 1276.3 782.9 1277.8 785.4C1279.3 787.9 1280.9 790.4 1282.7 792.8C1284.4 795.2 1286.1 797.6 1288.0 799.9C1289.9 802.1 1291.9 804.4 1294.0 806.5C1296.2 808.6 1298.4 810.7 1300.7 812.6C1303.1 814.5 1305.2 816.2 1308.1 818.0C1311.1 819.8 1315.2 821.8 1318.5 823.4C1321.8 825.0 1325.1 826.9 1328.0 827.8C1330.9 828.7 1333.1 829.0 1335.8 828.6C1338.5 828.2 1341.6 827.5 1344.0 825.4C1346.4 823.3 1348.2 820.5 1350.4 816.3C1352.6 812.1 1355.2 806.9 1357.0 800.0C1358.8 793.1 1360.3 783.7 1361.5 774.8C1362.7 765.9 1363.5 756.3 1364.4 746.7C1365.3 737.1 1366.1 727.3 1366.7 717.0C1367.3 706.7 1367.8 690.3 1368.0 685.0L1371.3 580.0L1372.5 537.3L1373.7 580.0C1374.2 590.0 1375.9 624.5 1376.7 640.0C1377.5 655.5 1377.8 662.2 1378.4 673.3C1379.0 684.4 1380.1 701.1 1380.4 706.7C1380.7 712.2 1381.7 732.5 1382.2 739.7C1382.7 747.0 1382.8 746.9 1383.2 750.3C1383.5 753.8 1383.9 757.2 1384.3 760.5C1384.7 763.9 1385.1 767.1 1385.5 770.3C1385.9 773.5 1386.4 776.7 1386.8 779.7C1387.3 782.8 1387.8 785.8 1388.3 788.8C1388.8 791.7 1389.3 794.6 1389.9 797.4C1390.5 800.2 1391.1 803.0 1391.7 805.7C1392.3 808.4 1393.0 811.1 1393.6 813.6C1394.3 816.2 1395.1 818.8 1395.8 821.2C1396.6 823.7 1397.4 826.1 1398.2 828.5C1399.0 830.9 1399.9 833.2 1400.8 835.4C1401.7 837.7 1402.7 839.9 1403.7 842.1C1404.7 844.2 1405.8 846.3 1406.9 848.4C1408.0 850.5 1409.2 852.5 1410.4 854.4C1411.7 856.4 1413.0 858.3 1414.3 860.2C1415.7 862.0 1417.1 863.9 1418.6 865.7C1420.1 867.4 1421.7 869.2 1423.3 870.9C1425.0 872.6 1426.7 874.2 1428.5 875.8C1430.3 877.4 1432.2 879.0 1434.2 880.5C1436.3 882.1 1438.3 883.6 1440.6 885.0C1442.8 886.5 1445.1 887.9 1447.5 889.3C1450.0 890.7 1452.5 892.0 1455.2 893.3C1457.9 894.6 1460.7 895.9 1463.7 897.2C1466.6 898.4 1469.7 899.6 1473.0 900.8C1476.3 902.0 1479.7 903.1 1483.3 904.3C1486.9 905.4 1490.6 906.5 1494.6 907.5C1498.6 908.6 1505.0 910.1 1507.1 910.7L1514.7 909.1L1521.4 889.9L1527.0 902.5C1528.0 902.4 1531.2 902.0 1533.2 902.0C1535.3 902.1 1537.4 902.5 1539.5 902.8C1541.6 903.1 1543.6 903.5 1545.7 903.8C1547.8 904.2 1549.9 904.6 1552.0 905.0C1554.0 905.4 1556.1 905.8 1558.2 906.2C1560.3 906.6 1562.4 907.0 1564.4 907.4C1566.5 907.8 1568.6 908.2 1570.7 908.6C1572.8 909.0 1574.8 909.4 1576.9 909.8C1579.0 910.2 1581.1 910.6 1583.2 911.0C1585.2 911.4 1587.3 911.8 1589.4 912.2C1591.5 912.6 1593.6 913.0 1595.6 913.4C1597.7 913.8 1599.8 914.2 1601.9 914.6C1604.0 915.0 1606.0 915.4 1608.1 915.9C1610.2 916.3 1612.3 916.7 1614.4 917.2C1616.4 917.6 1618.5 918.0 1620.6 918.5C1622.7 919.0 1624.8 919.4 1626.9 919.9C1628.9 920.4 1631.0 920.9 1633.1 921.3C1635.2 921.8 1637.3 922.4 1639.3 922.9C1641.4 923.4 1643.5 923.9 1645.6 924.5C1647.7 925.0 1649.7 925.6 1651.8 926.2C1653.9 926.7 1656.0 927.3 1658.1 927.9C1660.1 928.6 1662.2 929.2 1664.3 929.8C1666.4 930.5 1668.5 931.1 1670.5 931.8C1672.6 932.5 1674.7 933.2 1676.8 933.9C1678.9 934.7 1680.9 935.4 1683.0 936.2C1685.1 936.9 1687.2 937.7 1689.3 938.5C1691.3 939.4 1693.4 940.2 1695.5 941.0C1697.6 941.8 1699.7 942.7 1701.7 943.5C1703.8 944.3 1705.9 945.1 1708.0 945.9C1710.1 946.7 1712.1 947.5 1714.2 948.2C1716.3 949.0 1718.4 949.7 1720.5 950.3C1722.5 951.0 1724.6 951.6 1726.7 952.2C1728.8 952.7 1730.9 953.2 1732.9 953.7C1735.0 954.2 1737.1 954.6 1739.2 955.0C1741.3 955.4 1743.3 955.8 1745.4 956.1C1747.5 956.4 1749.6 956.6 1751.7 956.9C1753.7 957.1 1755.8 957.3 1757.9 957.4C1760.0 957.6 1762.1 957.7 1764.1 957.8C1766.2 957.8 1768.3 957.9 1770.4 957.9C1772.5 957.9 1774.5 957.8 1776.6 957.8C1778.7 957.7 1780.8 957.6 1782.9 957.5C1784.9 957.5 1787.0 957.3 1789.1 957.2C1791.2 957.1 1793.3 957.0 1795.3 956.9C1797.4 956.9 1799.5 956.8 1801.6 956.7C1803.7 956.7 1805.8 956.6 1807.8 956.6C1809.9 956.6 1812.0 956.6 1814.1 956.7C1816.2 956.8 1818.2 956.8 1820.3 956.9C1822.4 957.1 1824.5 957.2 1826.6 957.4C1828.6 957.5 1830.7 957.7 1832.8 957.9C1834.9 958.1 1837.0 958.3 1839.0 958.6C1841.1 958.8 1843.2 959.1 1845.3 959.4C1847.4 959.6 1849.4 959.9 1851.5 960.2C1853.6 960.6 1855.7 960.9 1857.8 961.2C1859.8 961.6 1861.9 961.9 1864.0 962.3C1866.1 962.6 1868.2 963.0 1870.2 963.4C1872.3 963.8 1874.4 964.1 1876.5 964.5C1878.6 964.9 1880.6 965.3 1882.7 965.7C1884.8 966.1 1886.9 966.5 1889.0 966.9C1891.0 967.3 1894.2 967.9 1895.2 968.1" stroke="#1433d6" stroke-width="3" fill="none" stroke-linejoin="bevel" stroke-linecap="butt"/>
<text x="849.5" y="997.2" text-anchor="middle" font-size="13" textLength="28.0" lengthAdjust="spacingAndGlyphs" font-family="Liberation Sans" fill="#151515">2.16</text>
<text x="959.7" y="997.2" text-anchor="middle" font-size="13" textLength="28.0" lengthAdjust="spacingAndGlyphs" font-family="Liberation Sans" fill="#151515">2.18</text>
<text x="1069.9" y="997.2" text-anchor="middle" font-size="13" textLength="20.5" lengthAdjust="spacingAndGlyphs" font-family="Liberation Sans" fill="#151515">2.2</text>
<text x="1180.2" y="997.2" text-anchor="middle" font-size="13" textLength="28.0" lengthAdjust="spacingAndGlyphs" font-family="Liberation Sans" fill="#151515">2.22</text>
<text x="1290.4" y="997.2" text-anchor="middle" font-size="13" textLength="28.0" lengthAdjust="spacingAndGlyphs" font-family="Liberation Sans" fill="#151515">2.24</text>
<text x="1400.6" y="997.2" text-anchor="middle" font-size="13" textLength="28.0" lengthAdjust="spacingAndGlyphs" font-family="Liberation Sans" fill="#151515">2.26</text>
<text x="1510.8" y="997.2" text-anchor="middle" font-size="13" textLength="28.0" lengthAdjust="spacingAndGlyphs" font-family="Liberation Sans" fill="#151515">2.28</text>
<text x="1621.0" y="997.2" text-anchor="middle" font-size="13" textLength="20.5" lengthAdjust="spacingAndGlyphs" font-family="Liberation Sans" fill="#151515">2.3</text>
<text x="1731.3" y="997.2" text-anchor="middle" font-size="13" textLength="28.0" lengthAdjust="spacingAndGlyphs" font-family="Liberation Sans" fill="#151515">2.32</text>
<text x="1841.5" y="997.2" text-anchor="middle" font-size="13" textLength="28.0" lengthAdjust="spacingAndGlyphs" font-family="Liberation Sans" fill="#151515">2.34</text>
<text x="760.7" y="862.8" text-anchor="end" font-size="13" textLength="15" lengthAdjust="spacingAndGlyphs" font-family="Liberation Sans" fill="#151515">10</text>
<text x="761.5" y="856.5" font-size="9.5" textLength="15.5" lengthAdjust="spacingAndGlyphs" font-family="Liberation Sans" fill="#151515">-10</text>
<text x="766.7" y="734.0" text-anchor="end" font-size="13" textLength="15" lengthAdjust="spacingAndGlyphs" font-family="Liberation Sans" fill="#151515">10</text>
<text x="767.5" y="727.8" font-size="9.5" textLength="9.5" lengthAdjust="spacingAndGlyphs" font-family="Liberation Sans" fill="#151515">-9</text>
<text x="766.7" y="605.3" text-anchor="end" font-size="13" textLength="15" lengthAdjust="spacingAndGlyphs" font-family="Liberation Sans" fill="#151515">10</text>
<text x="767.5" y="599.0" font-size="9.5" textLength="9.5" lengthAdjust="spacingAndGlyphs" font-family="Liberation Sans" fill="#151515">-8</text>
<text x="766.7" y="476.6" text-anchor="end" font-size="13" textLength="15" lengthAdjust="spacingAndGlyphs" font-family="Liberation Sans" fill="#151515">10</text>
<text x="767.5" y="470.2" font-size="9.5" textLength="9.5" lengthAdjust="spacingAndGlyphs" font-family="Liberation Sans" fill="#151515">-7</text>
<text x="766.7" y="347.8" text-anchor="end" font-size="13" textLength="15" lengthAdjust="spacingAndGlyphs" font-family="Liberation Sans" fill="#151515">10</text>
<text x="767.5" y="341.5" font-size="9.5" textLength="9.5" lengthAdjust="spacingAndGlyphs" font-family="Liberation Sans" fill="#151515">-6</text>
<text x="1345.2" y="1012.5" text-anchor="middle" font-size="13" textLength="54" lengthAdjust="spacingAndGlyphs" font-family="Liberation Sans" fill="#151515">freq (Hz)</text>
<text x="1876" y="997.2" font-size="13" font-family="Liberation Sans" fill="#151515"><tspan textLength="22" lengthAdjust="spacingAndGlyphs">&#215;10</tspan><tspan font-size="9.5" dx="2" dy="-6.5">8</tspan></text>
<text x="1344.6" y="262.7" text-anchor="middle" font-size="13" textLength="133" lengthAdjust="spacingAndGlyphs" font-family="Liberation Sans" fill="#151515">Total stored energy (J)</text>
<text transform="translate(722.5 630.5) rotate(-90)" text-anchor="middle" font-size="13" textLength="133" lengthAdjust="spacingAndGlyphs" font-family="Liberation Sans" fill="#151515">Total stored energy (J)</text>
<rect x="1713" y="300" width="177" height="33" fill="#777"/>
<rect x="1716.5" y="296.5" width="177" height="33" fill="#fff" stroke="#111" stroke-width="1.5"/>
<path d="M1724 313.3h35" stroke="#1433d6" stroke-width="3"/>
<text x="1767" y="318" font-size="13.6" font-family="Liberation Sans" fill="#151515">Total stored energy</text></svg>
</body></html>
